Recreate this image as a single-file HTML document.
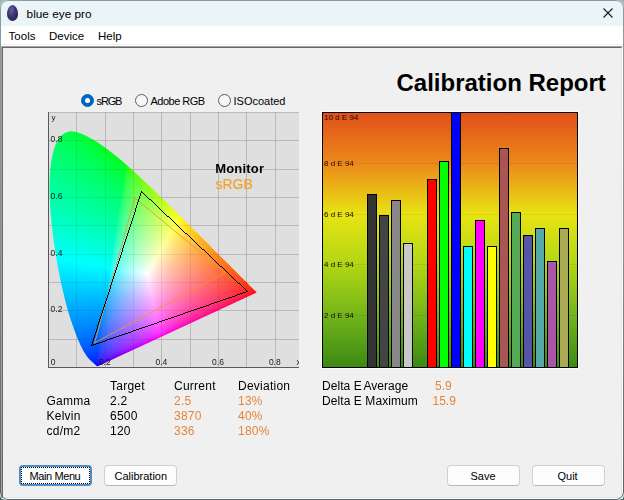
<!DOCTYPE html>
<html><head><meta charset="utf-8">
<style>
html,body{margin:0;padding:0;width:624px;height:500px;overflow:hidden;background:linear-gradient(to bottom,#a0b4b7 0%,#7e9494 60%,#3e5e5a 100%);}
*{box-sizing:border-box;}
.t{position:absolute;white-space:nowrap;font-family:"Liberation Sans",sans-serif;color:#000;line-height:1;}
#win{position:absolute;left:0;top:0;width:624px;height:500px;border-radius:8px 8px 5px 5px;overflow:hidden;background:#f0f0f0;}
#frame{position:absolute;left:0;top:0;width:624px;height:500px;pointer-events:none;}
#title{position:absolute;left:0;top:0;width:624px;height:26px;background:#ebf4f6;}
#menu{position:absolute;left:0;top:26px;width:624px;height:20px;background:#ffffff;}
#client{position:absolute;left:1px;top:46px;width:622px;height:453px;border-top:1px solid #a0a0a0;border-left:1px solid #a0a0a0;border-right:1px solid #ffffff;border-bottom:1px solid #ffffff;}
#client2{position:absolute;left:0;top:0;width:620px;height:451px;border-top:1px solid #696969;border-left:1px solid #696969;border-right:1px solid #e3e3e3;border-bottom:1px solid #e3e3e3;background:#f0f0f0;}
.radio{position:absolute;width:13px;height:13px;border-radius:50%;border:1px solid #5d5d5d;background:#f7f7f7;}
.radio.on{background:#0067c0;border-color:#0067c0;}
.radio.on:after{content:"";position:absolute;left:3px;top:3px;width:5px;height:5px;border-radius:50%;background:#fff;}
.btn{position:absolute;height:21px;border:1px solid #d0d0d0;border-bottom-color:#b8b8b8;border-radius:4px;background:#fdfdfd;}
.or{color:#e8843a;}
.lab{color:#1a1a1a;}
.bl{color:#1e0800;}
.tb{letter-spacing:0.25px;}
</style></head><body>
<div id="win">
<div id="title"></div><div id="menu"></div><div style="position:absolute;left:1px;top:44px;width:622px;height:1px;background:#f0f0f0"></div><div id="client"><div id="client2"></div></div>
<div style="position:absolute;left:7px;top:5.2px;width:11px;height:16px;border-radius:50% 50% 50% 50% / 58% 58% 42% 42%;background:radial-gradient(ellipse at 40% 30%,#6a609c 0%,#3a3274 45%,#1c1838 100%);"></div>
<div class="t" style="left:26.6px;top:8.6px;font-size:11.8px;">blue eye pro</div>
<svg style="position:absolute;left:0;top:0" width="624" height="30"><path d="M603.5 8.5 L612.5 17.5 M612.5 8.5 L603.5 17.5" stroke="#1b1b1b" stroke-width="1.1" fill="none"/></svg>
<div class="t" style="left:8.6px;top:31.0px;font-size:11.5px;">Tools</div>
<div class="t" style="left:49px;top:31.0px;font-size:11.5px;">Device</div>
<div class="t" style="left:98px;top:31.0px;font-size:11.5px;">Help</div>
<div class="t" style="left:396.5px;top:70.5px;font-size:24px;font-weight:bold;">Calibration Report</div>
<div class="radio on" style="left:81px;top:94px;"></div>
<div class="t" style="left:96.6px;top:96px;font-size:11px;letter-spacing:-1.2px;">sRGB</div>
<div class="radio" style="left:135px;top:94px;"></div>
<div class="t" style="left:150.5px;top:96px;font-size:11px;letter-spacing:-0.5px;">Adobe RGB</div>
<div class="radio" style="left:218px;top:94px;"></div>
<div class="t" style="left:233.5px;top:96px;font-size:11px;">ISOcoated</div>
<svg style="position:absolute;left:48px;top:112px" width="251" height="256"><defs><clipPath id="lc"><polygon points="49.8,254.2 49.1,254.2 48.3,253.6 47.1,252.5 44.9,250.6 41.3,247.2 35.7,239.2 26.4,218.0 20.0,198.7 13.4,172.0 7.2,138.7 2.8,103.1 1.6,70.1 4.4,43.1 11.5,25.6 21.5,19.4 32.9,21.5 44.3,27.3 55.1,34.2 65.5,41.9 75.8,50.4 85.9,59.5 106.2,78.7 126.3,98.5 145.7,117.7 163.5,135.4 178.1,150.1 189.1,161.0 196.4,168.3 201.0,172.9 204.2,176.0 206.2,178.0 208.6,180.4"/></clipPath><filter id="bf" x="-5%" y="-5%" width="110%" height="110%"><feGaussianBlur stdDeviation="2.5"/></filter></defs><rect width="251" height="256" fill="#dfdfdf"/><g clip-path="url(#lc)"><g filter="url(#bf)"><rect x="0" y="10" width="5" height="5" fill="#00ff51"/><rect x="5" y="10" width="5" height="5" fill="#00ff4b"/><rect x="10" y="10" width="5" height="5" fill="#00ff45"/><rect x="15" y="10" width="5" height="5" fill="#00ff3e"/><rect x="20" y="10" width="5" height="5" fill="#00ff36"/><rect x="25" y="10" width="5" height="5" fill="#00ff2c"/><rect x="30" y="10" width="5" height="5" fill="#00ff1f"/><rect x="35" y="10" width="5" height="5" fill="#00ff00"/><rect x="40" y="10" width="5" height="5" fill="#00ff00"/><rect x="45" y="10" width="5" height="5" fill="#00ff00"/><rect x="50" y="10" width="5" height="5" fill="#00ff00"/><rect x="55" y="10" width="5" height="5" fill="#00ff00"/><rect x="60" y="10" width="5" height="5" fill="#00ff00"/><rect x="65" y="10" width="5" height="5" fill="#00ff00"/><rect x="70" y="10" width="5" height="5" fill="#00ff00"/><rect x="75" y="10" width="5" height="5" fill="#00ff00"/><rect x="80" y="10" width="5" height="5" fill="#00ff00"/><rect x="85" y="10" width="5" height="5" fill="#2aff00"/><rect x="90" y="10" width="5" height="5" fill="#42ff00"/><rect x="95" y="10" width="5" height="5" fill="#54ff00"/><rect x="100" y="10" width="5" height="5" fill="#63ff00"/><rect x="105" y="10" width="5" height="5" fill="#70ff00"/><rect x="110" y="10" width="5" height="5" fill="#7cff00"/><rect x="115" y="10" width="5" height="5" fill="#88ff00"/><rect x="120" y="10" width="5" height="5" fill="#92ff00"/><rect x="125" y="10" width="5" height="5" fill="#9cff00"/><rect x="130" y="10" width="5" height="5" fill="#a6ff00"/><rect x="135" y="10" width="5" height="5" fill="#afff00"/><rect x="140" y="10" width="5" height="5" fill="#b8ff00"/><rect x="145" y="10" width="5" height="5" fill="#c1ff00"/><rect x="150" y="10" width="5" height="5" fill="#caff00"/><rect x="155" y="10" width="5" height="5" fill="#d2ff00"/><rect x="160" y="10" width="5" height="5" fill="#dbff00"/><rect x="165" y="10" width="5" height="5" fill="#e3ff00"/><rect x="170" y="10" width="5" height="5" fill="#ebff00"/><rect x="175" y="10" width="5" height="5" fill="#f3ff00"/><rect x="180" y="10" width="5" height="5" fill="#fbff00"/><rect x="185" y="10" width="5" height="5" fill="#fffb00"/><rect x="190" y="10" width="5" height="5" fill="#fff400"/><rect x="195" y="10" width="5" height="5" fill="#ffed00"/><rect x="200" y="10" width="5" height="5" fill="#ffe600"/><rect x="205" y="10" width="5" height="5" fill="#ffe000"/><rect x="210" y="10" width="5" height="5" fill="#ffda00"/><rect x="0" y="15" width="5" height="5" fill="#00ff57"/><rect x="5" y="15" width="5" height="5" fill="#00ff52"/><rect x="10" y="15" width="5" height="5" fill="#00ff4c"/><rect x="15" y="15" width="5" height="5" fill="#00ff46"/><rect x="20" y="15" width="5" height="5" fill="#00ff3f"/><rect x="25" y="15" width="5" height="5" fill="#00ff37"/><rect x="30" y="15" width="5" height="5" fill="#00ff2d"/><rect x="35" y="15" width="5" height="5" fill="#00ff20"/><rect x="40" y="15" width="5" height="5" fill="#00ff00"/><rect x="45" y="15" width="5" height="5" fill="#00ff00"/><rect x="50" y="15" width="5" height="5" fill="#00ff00"/><rect x="55" y="15" width="5" height="5" fill="#00ff00"/><rect x="60" y="15" width="5" height="5" fill="#00ff00"/><rect x="65" y="15" width="5" height="5" fill="#00ff00"/><rect x="70" y="15" width="5" height="5" fill="#00ff00"/><rect x="75" y="15" width="5" height="5" fill="#00ff00"/><rect x="80" y="15" width="5" height="5" fill="#00ff00"/><rect x="85" y="15" width="5" height="5" fill="#2fff00"/><rect x="90" y="15" width="5" height="5" fill="#46ff00"/><rect x="95" y="15" width="5" height="5" fill="#57ff00"/><rect x="100" y="15" width="5" height="5" fill="#66ff00"/><rect x="105" y="15" width="5" height="5" fill="#73ff00"/><rect x="110" y="15" width="5" height="5" fill="#7fff00"/><rect x="115" y="15" width="5" height="5" fill="#8bff00"/><rect x="120" y="15" width="5" height="5" fill="#95ff00"/><rect x="125" y="15" width="5" height="5" fill="#a0ff00"/><rect x="130" y="15" width="5" height="5" fill="#a9ff00"/><rect x="135" y="15" width="5" height="5" fill="#b3ff00"/><rect x="140" y="15" width="5" height="5" fill="#bcff00"/><rect x="145" y="15" width="5" height="5" fill="#c5ff00"/><rect x="150" y="15" width="5" height="5" fill="#ceff00"/><rect x="155" y="15" width="5" height="5" fill="#d6ff00"/><rect x="160" y="15" width="5" height="5" fill="#dfff00"/><rect x="165" y="15" width="5" height="5" fill="#e7ff00"/><rect x="170" y="15" width="5" height="5" fill="#efff00"/><rect x="175" y="15" width="5" height="5" fill="#f8ff00"/><rect x="180" y="15" width="5" height="5" fill="#fffe00"/><rect x="185" y="15" width="5" height="5" fill="#fff700"/><rect x="190" y="15" width="5" height="5" fill="#ffef00"/><rect x="195" y="15" width="5" height="5" fill="#ffe800"/><rect x="200" y="15" width="5" height="5" fill="#ffe200"/><rect x="205" y="15" width="5" height="5" fill="#ffdc00"/><rect x="210" y="15" width="5" height="5" fill="#ffd600"/><rect x="0" y="20" width="5" height="5" fill="#00ff5d"/><rect x="5" y="20" width="5" height="5" fill="#00ff59"/><rect x="10" y="20" width="5" height="5" fill="#00ff53"/><rect x="15" y="20" width="5" height="5" fill="#00ff4d"/><rect x="20" y="20" width="5" height="5" fill="#00ff47"/><rect x="25" y="20" width="5" height="5" fill="#00ff40"/><rect x="30" y="20" width="5" height="5" fill="#00ff38"/><rect x="35" y="20" width="5" height="5" fill="#00ff2e"/><rect x="40" y="20" width="5" height="5" fill="#00ff20"/><rect x="45" y="20" width="5" height="5" fill="#00ff03"/><rect x="50" y="20" width="5" height="5" fill="#00ff00"/><rect x="55" y="20" width="5" height="5" fill="#00ff00"/><rect x="60" y="20" width="5" height="5" fill="#00ff00"/><rect x="65" y="20" width="5" height="5" fill="#00ff00"/><rect x="70" y="20" width="5" height="5" fill="#00ff00"/><rect x="75" y="20" width="5" height="5" fill="#00ff00"/><rect x="80" y="20" width="5" height="5" fill="#00ff00"/><rect x="85" y="20" width="5" height="5" fill="#33ff00"/><rect x="90" y="20" width="5" height="5" fill="#49ff00"/><rect x="95" y="20" width="5" height="5" fill="#5bff00"/><rect x="100" y="20" width="5" height="5" fill="#69ff00"/><rect x="105" y="20" width="5" height="5" fill="#77ff00"/><rect x="110" y="20" width="5" height="5" fill="#83ff00"/><rect x="115" y="20" width="5" height="5" fill="#8eff00"/><rect x="120" y="20" width="5" height="5" fill="#99ff00"/><rect x="125" y="20" width="5" height="5" fill="#a3ff00"/><rect x="130" y="20" width="5" height="5" fill="#adff00"/><rect x="135" y="20" width="5" height="5" fill="#b6ff00"/><rect x="140" y="20" width="5" height="5" fill="#c0ff00"/><rect x="145" y="20" width="5" height="5" fill="#c9ff00"/><rect x="150" y="20" width="5" height="5" fill="#d2ff00"/><rect x="155" y="20" width="5" height="5" fill="#daff00"/><rect x="160" y="20" width="5" height="5" fill="#e3ff00"/><rect x="165" y="20" width="5" height="5" fill="#ebff00"/><rect x="170" y="20" width="5" height="5" fill="#f4ff00"/><rect x="175" y="20" width="5" height="5" fill="#fcff00"/><rect x="180" y="20" width="5" height="5" fill="#fffa00"/><rect x="185" y="20" width="5" height="5" fill="#fff200"/><rect x="190" y="20" width="5" height="5" fill="#ffeb00"/><rect x="195" y="20" width="5" height="5" fill="#ffe400"/><rect x="200" y="20" width="5" height="5" fill="#ffde00"/><rect x="205" y="20" width="5" height="5" fill="#ffd800"/><rect x="210" y="20" width="5" height="5" fill="#ffd200"/><rect x="0" y="25" width="5" height="5" fill="#00ff64"/><rect x="5" y="25" width="5" height="5" fill="#00ff5f"/><rect x="10" y="25" width="5" height="5" fill="#00ff5a"/><rect x="15" y="25" width="5" height="5" fill="#00ff55"/><rect x="20" y="25" width="5" height="5" fill="#00ff4f"/><rect x="25" y="25" width="5" height="5" fill="#00ff48"/><rect x="30" y="25" width="5" height="5" fill="#00ff41"/><rect x="35" y="25" width="5" height="5" fill="#00ff39"/><rect x="40" y="25" width="5" height="5" fill="#00ff2f"/><rect x="45" y="25" width="5" height="5" fill="#00ff21"/><rect x="50" y="25" width="5" height="5" fill="#00ff06"/><rect x="55" y="25" width="5" height="5" fill="#00ff00"/><rect x="60" y="25" width="5" height="5" fill="#00ff00"/><rect x="65" y="25" width="5" height="5" fill="#00ff00"/><rect x="70" y="25" width="5" height="5" fill="#00ff00"/><rect x="75" y="25" width="5" height="5" fill="#00ff00"/><rect x="80" y="25" width="5" height="5" fill="#12ff00"/><rect x="85" y="25" width="5" height="5" fill="#38ff00"/><rect x="90" y="25" width="5" height="5" fill="#4dff00"/><rect x="95" y="25" width="5" height="5" fill="#5eff00"/><rect x="100" y="25" width="5" height="5" fill="#6dff00"/><rect x="105" y="25" width="5" height="5" fill="#7aff00"/><rect x="110" y="25" width="5" height="5" fill="#86ff00"/><rect x="115" y="25" width="5" height="5" fill="#91ff00"/><rect x="120" y="25" width="5" height="5" fill="#9cff00"/><rect x="125" y="25" width="5" height="5" fill="#a7ff00"/><rect x="130" y="25" width="5" height="5" fill="#b0ff00"/><rect x="135" y="25" width="5" height="5" fill="#baff00"/><rect x="140" y="25" width="5" height="5" fill="#c3ff00"/><rect x="145" y="25" width="5" height="5" fill="#cdff00"/><rect x="150" y="25" width="5" height="5" fill="#d6ff00"/><rect x="155" y="25" width="5" height="5" fill="#dfff00"/><rect x="160" y="25" width="5" height="5" fill="#e7ff00"/><rect x="165" y="25" width="5" height="5" fill="#f0ff00"/><rect x="170" y="25" width="5" height="5" fill="#f8ff00"/><rect x="175" y="25" width="5" height="5" fill="#fffd00"/><rect x="180" y="25" width="5" height="5" fill="#fff500"/><rect x="185" y="25" width="5" height="5" fill="#ffee00"/><rect x="190" y="25" width="5" height="5" fill="#ffe700"/><rect x="195" y="25" width="5" height="5" fill="#ffe000"/><rect x="200" y="25" width="5" height="5" fill="#ffda00"/><rect x="205" y="25" width="5" height="5" fill="#ffd400"/><rect x="210" y="25" width="5" height="5" fill="#ffce00"/><rect x="0" y="30" width="5" height="5" fill="#00ff6a"/><rect x="5" y="30" width="5" height="5" fill="#00ff65"/><rect x="10" y="30" width="5" height="5" fill="#00ff61"/><rect x="15" y="30" width="5" height="5" fill="#00ff5b"/><rect x="20" y="30" width="5" height="5" fill="#00ff56"/><rect x="25" y="30" width="5" height="5" fill="#00ff50"/><rect x="30" y="30" width="5" height="5" fill="#00ff4a"/><rect x="35" y="30" width="5" height="5" fill="#00ff42"/><rect x="40" y="30" width="5" height="5" fill="#00ff3a"/><rect x="45" y="30" width="5" height="5" fill="#00ff30"/><rect x="50" y="30" width="5" height="5" fill="#00ff22"/><rect x="55" y="30" width="5" height="5" fill="#00ff08"/><rect x="60" y="30" width="5" height="5" fill="#00ff00"/><rect x="65" y="30" width="5" height="5" fill="#00ff00"/><rect x="70" y="30" width="5" height="5" fill="#00ff00"/><rect x="75" y="30" width="5" height="5" fill="#00ff00"/><rect x="80" y="30" width="5" height="5" fill="#1cff00"/><rect x="85" y="30" width="5" height="5" fill="#3cff00"/><rect x="90" y="30" width="5" height="5" fill="#51ff00"/><rect x="95" y="30" width="5" height="5" fill="#62ff00"/><rect x="100" y="30" width="5" height="5" fill="#70ff00"/><rect x="105" y="30" width="5" height="5" fill="#7dff00"/><rect x="110" y="30" width="5" height="5" fill="#89ff00"/><rect x="115" y="30" width="5" height="5" fill="#95ff00"/><rect x="120" y="30" width="5" height="5" fill="#a0ff00"/><rect x="125" y="30" width="5" height="5" fill="#aaff00"/><rect x="130" y="30" width="5" height="5" fill="#b4ff00"/><rect x="135" y="30" width="5" height="5" fill="#beff00"/><rect x="140" y="30" width="5" height="5" fill="#c7ff00"/><rect x="145" y="30" width="5" height="5" fill="#d1ff00"/><rect x="150" y="30" width="5" height="5" fill="#daff00"/><rect x="155" y="30" width="5" height="5" fill="#e3ff00"/><rect x="160" y="30" width="5" height="5" fill="#ecff00"/><rect x="165" y="30" width="5" height="5" fill="#f4ff00"/><rect x="170" y="30" width="5" height="5" fill="#fdff00"/><rect x="175" y="30" width="5" height="5" fill="#fff800"/><rect x="180" y="30" width="5" height="5" fill="#fff000"/><rect x="185" y="30" width="5" height="5" fill="#ffe900"/><rect x="190" y="30" width="5" height="5" fill="#ffe200"/><rect x="195" y="30" width="5" height="5" fill="#ffdc00"/><rect x="200" y="30" width="5" height="5" fill="#ffd500"/><rect x="205" y="30" width="5" height="5" fill="#ffd000"/><rect x="210" y="30" width="5" height="5" fill="#ffca00"/><rect x="0" y="35" width="5" height="5" fill="#00ff70"/><rect x="5" y="35" width="5" height="5" fill="#00ff6b"/><rect x="10" y="35" width="5" height="5" fill="#00ff67"/><rect x="15" y="35" width="5" height="5" fill="#00ff62"/><rect x="20" y="35" width="5" height="5" fill="#00ff5d"/><rect x="25" y="35" width="5" height="5" fill="#00ff58"/><rect x="30" y="35" width="5" height="5" fill="#00ff51"/><rect x="35" y="35" width="5" height="5" fill="#00ff4b"/><rect x="40" y="35" width="5" height="5" fill="#00ff43"/><rect x="45" y="35" width="5" height="5" fill="#00ff3b"/><rect x="50" y="35" width="5" height="5" fill="#00ff31"/><rect x="55" y="35" width="5" height="5" fill="#00ff23"/><rect x="60" y="35" width="5" height="5" fill="#00ff09"/><rect x="65" y="35" width="5" height="5" fill="#00ff00"/><rect x="70" y="35" width="5" height="5" fill="#00ff00"/><rect x="75" y="35" width="5" height="5" fill="#00ff00"/><rect x="80" y="35" width="5" height="5" fill="#23ff00"/><rect x="85" y="35" width="5" height="5" fill="#40ff00"/><rect x="90" y="35" width="5" height="5" fill="#55ff00"/><rect x="95" y="35" width="5" height="5" fill="#65ff00"/><rect x="100" y="35" width="5" height="5" fill="#74ff00"/><rect x="105" y="35" width="5" height="5" fill="#81ff00"/><rect x="110" y="35" width="5" height="5" fill="#8dff00"/><rect x="115" y="35" width="5" height="5" fill="#98ff00"/><rect x="120" y="35" width="5" height="5" fill="#a3ff00"/><rect x="125" y="35" width="5" height="5" fill="#aeff00"/><rect x="130" y="35" width="5" height="5" fill="#b8ff00"/><rect x="135" y="35" width="5" height="5" fill="#c2ff00"/><rect x="140" y="35" width="5" height="5" fill="#ccff00"/><rect x="145" y="35" width="5" height="5" fill="#d5ff00"/><rect x="150" y="35" width="5" height="5" fill="#deff00"/><rect x="155" y="35" width="5" height="5" fill="#e7ff00"/><rect x="160" y="35" width="5" height="5" fill="#f0ff00"/><rect x="165" y="35" width="5" height="5" fill="#f9ff00"/><rect x="170" y="35" width="5" height="5" fill="#fffc00"/><rect x="175" y="35" width="5" height="5" fill="#fff400"/><rect x="180" y="35" width="5" height="5" fill="#ffec00"/><rect x="185" y="35" width="5" height="5" fill="#ffe500"/><rect x="190" y="35" width="5" height="5" fill="#ffde00"/><rect x="195" y="35" width="5" height="5" fill="#ffd700"/><rect x="200" y="35" width="5" height="5" fill="#ffd100"/><rect x="205" y="35" width="5" height="5" fill="#ffcc00"/><rect x="210" y="35" width="5" height="5" fill="#ffc600"/><rect x="0" y="40" width="5" height="5" fill="#00ff75"/><rect x="5" y="40" width="5" height="5" fill="#00ff71"/><rect x="10" y="40" width="5" height="5" fill="#00ff6d"/><rect x="15" y="40" width="5" height="5" fill="#00ff69"/><rect x="20" y="40" width="5" height="5" fill="#00ff64"/><rect x="25" y="40" width="5" height="5" fill="#00ff5f"/><rect x="30" y="40" width="5" height="5" fill="#00ff59"/><rect x="35" y="40" width="5" height="5" fill="#00ff53"/><rect x="40" y="40" width="5" height="5" fill="#00ff4c"/><rect x="45" y="40" width="5" height="5" fill="#00ff45"/><rect x="50" y="40" width="5" height="5" fill="#00ff3c"/><rect x="55" y="40" width="5" height="5" fill="#00ff32"/><rect x="60" y="40" width="5" height="5" fill="#00ff24"/><rect x="65" y="40" width="5" height="5" fill="#00ff0a"/><rect x="70" y="40" width="5" height="5" fill="#00ff00"/><rect x="75" y="40" width="5" height="5" fill="#00ff00"/><rect x="80" y="40" width="5" height="5" fill="#29ff00"/><rect x="85" y="40" width="5" height="5" fill="#45ff00"/><rect x="90" y="40" width="5" height="5" fill="#58ff00"/><rect x="95" y="40" width="5" height="5" fill="#69ff00"/><rect x="100" y="40" width="5" height="5" fill="#77ff00"/><rect x="105" y="40" width="5" height="5" fill="#84ff00"/><rect x="110" y="40" width="5" height="5" fill="#91ff00"/><rect x="115" y="40" width="5" height="5" fill="#9cff00"/><rect x="120" y="40" width="5" height="5" fill="#a7ff00"/><rect x="125" y="40" width="5" height="5" fill="#b2ff00"/><rect x="130" y="40" width="5" height="5" fill="#bcff00"/><rect x="135" y="40" width="5" height="5" fill="#c6ff00"/><rect x="140" y="40" width="5" height="5" fill="#d0ff00"/><rect x="145" y="40" width="5" height="5" fill="#d9ff00"/><rect x="150" y="40" width="5" height="5" fill="#e3ff00"/><rect x="155" y="40" width="5" height="5" fill="#ecff00"/><rect x="160" y="40" width="5" height="5" fill="#f5ff00"/><rect x="165" y="40" width="5" height="5" fill="#feff00"/><rect x="170" y="40" width="5" height="5" fill="#fff700"/><rect x="175" y="40" width="5" height="5" fill="#ffef00"/><rect x="180" y="40" width="5" height="5" fill="#ffe700"/><rect x="185" y="40" width="5" height="5" fill="#ffe000"/><rect x="190" y="40" width="5" height="5" fill="#ffd900"/><rect x="195" y="40" width="5" height="5" fill="#ffd300"/><rect x="200" y="40" width="5" height="5" fill="#ffcd00"/><rect x="205" y="40" width="5" height="5" fill="#ffc700"/><rect x="210" y="40" width="5" height="5" fill="#ffc200"/><rect x="0" y="45" width="5" height="5" fill="#00ff7b"/><rect x="5" y="45" width="5" height="5" fill="#00ff77"/><rect x="10" y="45" width="5" height="5" fill="#00ff73"/><rect x="15" y="45" width="5" height="5" fill="#00ff6f"/><rect x="20" y="45" width="5" height="5" fill="#00ff6a"/><rect x="25" y="45" width="5" height="5" fill="#00ff66"/><rect x="30" y="45" width="5" height="5" fill="#00ff60"/><rect x="35" y="45" width="5" height="5" fill="#00ff5b"/><rect x="40" y="45" width="5" height="5" fill="#00ff55"/><rect x="45" y="45" width="5" height="5" fill="#00ff4e"/><rect x="50" y="45" width="5" height="5" fill="#00ff46"/><rect x="55" y="45" width="5" height="5" fill="#00ff3d"/><rect x="60" y="45" width="5" height="5" fill="#00ff33"/><rect x="65" y="45" width="5" height="5" fill="#00ff25"/><rect x="70" y="45" width="5" height="5" fill="#00ff0c"/><rect x="75" y="45" width="5" height="5" fill="#00ff00"/><rect x="80" y="45" width="5" height="5" fill="#2fff00"/><rect x="85" y="45" width="5" height="5" fill="#49ff00"/><rect x="90" y="45" width="5" height="5" fill="#5cff00"/><rect x="95" y="45" width="5" height="5" fill="#6cff00"/><rect x="100" y="45" width="5" height="5" fill="#7bff00"/><rect x="105" y="45" width="5" height="5" fill="#88ff00"/><rect x="110" y="45" width="5" height="5" fill="#94ff00"/><rect x="115" y="45" width="5" height="5" fill="#a0ff00"/><rect x="120" y="45" width="5" height="5" fill="#abff00"/><rect x="125" y="45" width="5" height="5" fill="#b6ff00"/><rect x="130" y="45" width="5" height="5" fill="#c0ff00"/><rect x="135" y="45" width="5" height="5" fill="#caff00"/><rect x="140" y="45" width="5" height="5" fill="#d4ff00"/><rect x="145" y="45" width="5" height="5" fill="#deff00"/><rect x="150" y="45" width="5" height="5" fill="#e8ff00"/><rect x="155" y="45" width="5" height="5" fill="#f1ff00"/><rect x="160" y="45" width="5" height="5" fill="#faff00"/><rect x="165" y="45" width="5" height="5" fill="#fffa00"/><rect x="170" y="45" width="5" height="5" fill="#fff200"/><rect x="175" y="45" width="5" height="5" fill="#ffea00"/><rect x="180" y="45" width="5" height="5" fill="#ffe200"/><rect x="185" y="45" width="5" height="5" fill="#ffdb00"/><rect x="190" y="45" width="5" height="5" fill="#ffd500"/><rect x="195" y="45" width="5" height="5" fill="#ffcf00"/><rect x="200" y="45" width="5" height="5" fill="#ffc900"/><rect x="205" y="45" width="5" height="5" fill="#ffc300"/><rect x="210" y="45" width="5" height="5" fill="#ffbe00"/><rect x="0" y="50" width="5" height="5" fill="#00ff81"/><rect x="5" y="50" width="5" height="5" fill="#00ff7d"/><rect x="10" y="50" width="5" height="5" fill="#00ff79"/><rect x="15" y="50" width="5" height="5" fill="#00ff75"/><rect x="20" y="50" width="5" height="5" fill="#00ff71"/><rect x="25" y="50" width="5" height="5" fill="#00ff6c"/><rect x="30" y="50" width="5" height="5" fill="#00ff67"/><rect x="35" y="50" width="5" height="5" fill="#00ff62"/><rect x="40" y="50" width="5" height="5" fill="#00ff5c"/><rect x="45" y="50" width="5" height="5" fill="#00ff56"/><rect x="50" y="50" width="5" height="5" fill="#00ff4f"/><rect x="55" y="50" width="5" height="5" fill="#00ff48"/><rect x="60" y="50" width="5" height="5" fill="#00ff3f"/><rect x="65" y="50" width="5" height="5" fill="#00ff34"/><rect x="70" y="50" width="5" height="5" fill="#00ff26"/><rect x="75" y="50" width="5" height="5" fill="#00ff0d"/><rect x="80" y="50" width="5" height="5" fill="#34ff00"/><rect x="85" y="50" width="5" height="5" fill="#4dff00"/><rect x="90" y="50" width="5" height="5" fill="#60ff00"/><rect x="95" y="50" width="5" height="5" fill="#70ff00"/><rect x="100" y="50" width="5" height="5" fill="#7eff00"/><rect x="105" y="50" width="5" height="5" fill="#8cff00"/><rect x="110" y="50" width="5" height="5" fill="#98ff00"/><rect x="115" y="50" width="5" height="5" fill="#a4ff00"/><rect x="120" y="50" width="5" height="5" fill="#afff00"/><rect x="125" y="50" width="5" height="5" fill="#baff00"/><rect x="130" y="50" width="5" height="5" fill="#c5ff00"/><rect x="135" y="50" width="5" height="5" fill="#cfff00"/><rect x="140" y="50" width="5" height="5" fill="#d9ff00"/><rect x="145" y="50" width="5" height="5" fill="#e3ff00"/><rect x="150" y="50" width="5" height="5" fill="#ecff00"/><rect x="155" y="50" width="5" height="5" fill="#f6ff00"/><rect x="160" y="50" width="5" height="5" fill="#fffe00"/><rect x="165" y="50" width="5" height="5" fill="#fff500"/><rect x="170" y="50" width="5" height="5" fill="#ffed00"/><rect x="175" y="50" width="5" height="5" fill="#ffe500"/><rect x="180" y="50" width="5" height="5" fill="#ffde00"/><rect x="185" y="50" width="5" height="5" fill="#ffd700"/><rect x="190" y="50" width="5" height="5" fill="#ffd000"/><rect x="195" y="50" width="5" height="5" fill="#ffca00"/><rect x="200" y="50" width="5" height="5" fill="#ffc400"/><rect x="205" y="50" width="5" height="5" fill="#ffbf00"/><rect x="210" y="50" width="5" height="5" fill="#ffba00"/><rect x="0" y="55" width="5" height="5" fill="#00ff87"/><rect x="5" y="55" width="5" height="5" fill="#00ff83"/><rect x="10" y="55" width="5" height="5" fill="#00ff80"/><rect x="15" y="55" width="5" height="5" fill="#00ff7c"/><rect x="20" y="55" width="5" height="5" fill="#00ff78"/><rect x="25" y="55" width="5" height="5" fill="#00ff73"/><rect x="30" y="55" width="5" height="5" fill="#00ff6e"/><rect x="35" y="55" width="5" height="5" fill="#00ff69"/><rect x="40" y="55" width="5" height="5" fill="#00ff64"/><rect x="45" y="55" width="5" height="5" fill="#00ff5e"/><rect x="50" y="55" width="5" height="5" fill="#00ff58"/><rect x="55" y="55" width="5" height="5" fill="#00ff51"/><rect x="60" y="55" width="5" height="5" fill="#00ff49"/><rect x="65" y="55" width="5" height="5" fill="#00ff40"/><rect x="70" y="55" width="5" height="5" fill="#00ff35"/><rect x="75" y="55" width="5" height="5" fill="#09ff27"/><rect x="80" y="55" width="5" height="5" fill="#39ff0e"/><rect x="85" y="55" width="5" height="5" fill="#51ff00"/><rect x="90" y="55" width="5" height="5" fill="#64ff00"/><rect x="95" y="55" width="5" height="5" fill="#74ff00"/><rect x="100" y="55" width="5" height="5" fill="#82ff00"/><rect x="105" y="55" width="5" height="5" fill="#90ff00"/><rect x="110" y="55" width="5" height="5" fill="#9cff00"/><rect x="115" y="55" width="5" height="5" fill="#a8ff00"/><rect x="120" y="55" width="5" height="5" fill="#b3ff00"/><rect x="125" y="55" width="5" height="5" fill="#beff00"/><rect x="130" y="55" width="5" height="5" fill="#c9ff00"/><rect x="135" y="55" width="5" height="5" fill="#d3ff00"/><rect x="140" y="55" width="5" height="5" fill="#deff00"/><rect x="145" y="55" width="5" height="5" fill="#e8ff00"/><rect x="150" y="55" width="5" height="5" fill="#f2ff00"/><rect x="155" y="55" width="5" height="5" fill="#fbff00"/><rect x="160" y="55" width="5" height="5" fill="#fff900"/><rect x="165" y="55" width="5" height="5" fill="#fff000"/><rect x="170" y="55" width="5" height="5" fill="#ffe800"/><rect x="175" y="55" width="5" height="5" fill="#ffe000"/><rect x="180" y="55" width="5" height="5" fill="#ffd900"/><rect x="185" y="55" width="5" height="5" fill="#ffd200"/><rect x="190" y="55" width="5" height="5" fill="#ffcc00"/><rect x="195" y="55" width="5" height="5" fill="#ffc600"/><rect x="200" y="55" width="5" height="5" fill="#ffc000"/><rect x="205" y="55" width="5" height="5" fill="#ffbb00"/><rect x="210" y="55" width="5" height="5" fill="#ffb500"/><rect x="0" y="60" width="5" height="5" fill="#00ff8d"/><rect x="5" y="60" width="5" height="5" fill="#00ff89"/><rect x="10" y="60" width="5" height="5" fill="#00ff86"/><rect x="15" y="60" width="5" height="5" fill="#00ff82"/><rect x="20" y="60" width="5" height="5" fill="#00ff7e"/><rect x="25" y="60" width="5" height="5" fill="#00ff7a"/><rect x="30" y="60" width="5" height="5" fill="#00ff75"/><rect x="35" y="60" width="5" height="5" fill="#00ff71"/><rect x="40" y="60" width="5" height="5" fill="#00ff6c"/><rect x="45" y="60" width="5" height="5" fill="#00ff66"/><rect x="50" y="60" width="5" height="5" fill="#00ff60"/><rect x="55" y="60" width="5" height="5" fill="#00ff5a"/><rect x="60" y="60" width="5" height="5" fill="#00ff53"/><rect x="65" y="60" width="5" height="5" fill="#00ff4b"/><rect x="70" y="60" width="5" height="5" fill="#00ff42"/><rect x="75" y="60" width="5" height="5" fill="#18ff37"/><rect x="80" y="60" width="5" height="5" fill="#3eff28"/><rect x="85" y="60" width="5" height="5" fill="#55ff0f"/><rect x="90" y="60" width="5" height="5" fill="#68ff00"/><rect x="95" y="60" width="5" height="5" fill="#78ff00"/><rect x="100" y="60" width="5" height="5" fill="#86ff00"/><rect x="105" y="60" width="5" height="5" fill="#94ff00"/><rect x="110" y="60" width="5" height="5" fill="#a0ff00"/><rect x="115" y="60" width="5" height="5" fill="#acff00"/><rect x="120" y="60" width="5" height="5" fill="#b8ff00"/><rect x="125" y="60" width="5" height="5" fill="#c3ff00"/><rect x="130" y="60" width="5" height="5" fill="#ceff00"/><rect x="135" y="60" width="5" height="5" fill="#d8ff00"/><rect x="140" y="60" width="5" height="5" fill="#e3ff00"/><rect x="145" y="60" width="5" height="5" fill="#edff00"/><rect x="150" y="60" width="5" height="5" fill="#f7ff00"/><rect x="155" y="60" width="5" height="5" fill="#fffd00"/><rect x="160" y="60" width="5" height="5" fill="#fff300"/><rect x="165" y="60" width="5" height="5" fill="#ffeb00"/><rect x="170" y="60" width="5" height="5" fill="#ffe300"/><rect x="175" y="60" width="5" height="5" fill="#ffdb00"/><rect x="180" y="60" width="5" height="5" fill="#ffd400"/><rect x="185" y="60" width="5" height="5" fill="#ffcd00"/><rect x="190" y="60" width="5" height="5" fill="#ffc700"/><rect x="195" y="60" width="5" height="5" fill="#ffc100"/><rect x="200" y="60" width="5" height="5" fill="#ffbc00"/><rect x="205" y="60" width="5" height="5" fill="#ffb600"/><rect x="210" y="60" width="5" height="5" fill="#ffb100"/><rect x="0" y="65" width="5" height="5" fill="#00ff93"/><rect x="5" y="65" width="5" height="5" fill="#00ff8f"/><rect x="10" y="65" width="5" height="5" fill="#00ff8c"/><rect x="15" y="65" width="5" height="5" fill="#00ff88"/><rect x="20" y="65" width="5" height="5" fill="#00ff84"/><rect x="25" y="65" width="5" height="5" fill="#00ff80"/><rect x="30" y="65" width="5" height="5" fill="#00ff7c"/><rect x="35" y="65" width="5" height="5" fill="#00ff78"/><rect x="40" y="65" width="5" height="5" fill="#00ff73"/><rect x="45" y="65" width="5" height="5" fill="#00ff6e"/><rect x="50" y="65" width="5" height="5" fill="#00ff68"/><rect x="55" y="65" width="5" height="5" fill="#00ff62"/><rect x="60" y="65" width="5" height="5" fill="#00ff5c"/><rect x="65" y="65" width="5" height="5" fill="#00ff55"/><rect x="70" y="65" width="5" height="5" fill="#00ff4c"/><rect x="75" y="65" width="5" height="5" fill="#21ff43"/><rect x="80" y="65" width="5" height="5" fill="#43ff38"/><rect x="85" y="65" width="5" height="5" fill="#5aff2a"/><rect x="90" y="65" width="5" height="5" fill="#6cff11"/><rect x="95" y="65" width="5" height="5" fill="#7cff00"/><rect x="100" y="65" width="5" height="5" fill="#8aff00"/><rect x="105" y="65" width="5" height="5" fill="#98ff00"/><rect x="110" y="65" width="5" height="5" fill="#a4ff00"/><rect x="115" y="65" width="5" height="5" fill="#b1ff00"/><rect x="120" y="65" width="5" height="5" fill="#bcff00"/><rect x="125" y="65" width="5" height="5" fill="#c8ff00"/><rect x="130" y="65" width="5" height="5" fill="#d3ff00"/><rect x="135" y="65" width="5" height="5" fill="#ddff00"/><rect x="140" y="65" width="5" height="5" fill="#e8ff00"/><rect x="145" y="65" width="5" height="5" fill="#f2ff00"/><rect x="150" y="65" width="5" height="5" fill="#fdff00"/><rect x="155" y="65" width="5" height="5" fill="#fff700"/><rect x="160" y="65" width="5" height="5" fill="#ffee00"/><rect x="165" y="65" width="5" height="5" fill="#ffe500"/><rect x="170" y="65" width="5" height="5" fill="#ffde00"/><rect x="175" y="65" width="5" height="5" fill="#ffd600"/><rect x="180" y="65" width="5" height="5" fill="#ffcf00"/><rect x="185" y="65" width="5" height="5" fill="#ffc900"/><rect x="190" y="65" width="5" height="5" fill="#ffc200"/><rect x="195" y="65" width="5" height="5" fill="#ffbd00"/><rect x="200" y="65" width="5" height="5" fill="#ffb700"/><rect x="205" y="65" width="5" height="5" fill="#ffb200"/><rect x="210" y="65" width="5" height="5" fill="#ffad00"/><rect x="0" y="70" width="5" height="5" fill="#00ff99"/><rect x="5" y="70" width="5" height="5" fill="#00ff95"/><rect x="10" y="70" width="5" height="5" fill="#00ff92"/><rect x="15" y="70" width="5" height="5" fill="#00ff8f"/><rect x="20" y="70" width="5" height="5" fill="#00ff8b"/><rect x="25" y="70" width="5" height="5" fill="#00ff87"/><rect x="30" y="70" width="5" height="5" fill="#00ff83"/><rect x="35" y="70" width="5" height="5" fill="#00ff7f"/><rect x="40" y="70" width="5" height="5" fill="#00ff7a"/><rect x="45" y="70" width="5" height="5" fill="#00ff75"/><rect x="50" y="70" width="5" height="5" fill="#00ff70"/><rect x="55" y="70" width="5" height="5" fill="#00ff6a"/><rect x="60" y="70" width="5" height="5" fill="#00ff64"/><rect x="65" y="70" width="5" height="5" fill="#00ff5e"/><rect x="70" y="70" width="5" height="5" fill="#00ff57"/><rect x="75" y="70" width="5" height="5" fill="#29ff4e"/><rect x="80" y="70" width="5" height="5" fill="#48ff45"/><rect x="85" y="70" width="5" height="5" fill="#5eff39"/><rect x="90" y="70" width="5" height="5" fill="#70ff2b"/><rect x="95" y="70" width="5" height="5" fill="#80ff12"/><rect x="100" y="70" width="5" height="5" fill="#8eff00"/><rect x="105" y="70" width="5" height="5" fill="#9cff00"/><rect x="110" y="70" width="5" height="5" fill="#a9ff00"/><rect x="115" y="70" width="5" height="5" fill="#b5ff00"/><rect x="120" y="70" width="5" height="5" fill="#c1ff00"/><rect x="125" y="70" width="5" height="5" fill="#ccff00"/><rect x="130" y="70" width="5" height="5" fill="#d8ff00"/><rect x="135" y="70" width="5" height="5" fill="#e3ff00"/><rect x="140" y="70" width="5" height="5" fill="#edff00"/><rect x="145" y="70" width="5" height="5" fill="#f8ff00"/><rect x="150" y="70" width="5" height="5" fill="#fffb00"/><rect x="155" y="70" width="5" height="5" fill="#fff200"/><rect x="160" y="70" width="5" height="5" fill="#ffe800"/><rect x="165" y="70" width="5" height="5" fill="#ffe000"/><rect x="170" y="70" width="5" height="5" fill="#ffd800"/><rect x="175" y="70" width="5" height="5" fill="#ffd100"/><rect x="180" y="70" width="5" height="5" fill="#ffca00"/><rect x="185" y="70" width="5" height="5" fill="#ffc400"/><rect x="190" y="70" width="5" height="5" fill="#ffbe00"/><rect x="195" y="70" width="5" height="5" fill="#ffb800"/><rect x="200" y="70" width="5" height="5" fill="#ffb300"/><rect x="205" y="70" width="5" height="5" fill="#ffad00"/><rect x="210" y="70" width="5" height="5" fill="#ffa800"/><rect x="0" y="75" width="5" height="5" fill="#00ff9e"/><rect x="5" y="75" width="5" height="5" fill="#00ff9b"/><rect x="10" y="75" width="5" height="5" fill="#00ff98"/><rect x="15" y="75" width="5" height="5" fill="#00ff95"/><rect x="20" y="75" width="5" height="5" fill="#00ff91"/><rect x="25" y="75" width="5" height="5" fill="#00ff8e"/><rect x="30" y="75" width="5" height="5" fill="#00ff8a"/><rect x="35" y="75" width="5" height="5" fill="#00ff86"/><rect x="40" y="75" width="5" height="5" fill="#00ff81"/><rect x="45" y="75" width="5" height="5" fill="#00ff7d"/><rect x="50" y="75" width="5" height="5" fill="#00ff78"/><rect x="55" y="75" width="5" height="5" fill="#00ff73"/><rect x="60" y="75" width="5" height="5" fill="#00ff6d"/><rect x="65" y="75" width="5" height="5" fill="#00ff67"/><rect x="70" y="75" width="5" height="5" fill="#00ff60"/><rect x="75" y="75" width="5" height="5" fill="#2fff59"/><rect x="80" y="75" width="5" height="5" fill="#4dff50"/><rect x="85" y="75" width="5" height="5" fill="#62ff47"/><rect x="90" y="75" width="5" height="5" fill="#74ff3b"/><rect x="95" y="75" width="5" height="5" fill="#84ff2c"/><rect x="100" y="75" width="5" height="5" fill="#93ff13"/><rect x="105" y="75" width="5" height="5" fill="#a0ff00"/><rect x="110" y="75" width="5" height="5" fill="#adff00"/><rect x="115" y="75" width="5" height="5" fill="#baff00"/><rect x="120" y="75" width="5" height="5" fill="#c6ff00"/><rect x="125" y="75" width="5" height="5" fill="#d2ff00"/><rect x="130" y="75" width="5" height="5" fill="#ddff00"/><rect x="135" y="75" width="5" height="5" fill="#e8ff00"/><rect x="140" y="75" width="5" height="5" fill="#f3ff00"/><rect x="145" y="75" width="5" height="5" fill="#feff00"/><rect x="150" y="75" width="5" height="5" fill="#fff500"/><rect x="155" y="75" width="5" height="5" fill="#ffec00"/><rect x="160" y="75" width="5" height="5" fill="#ffe300"/><rect x="165" y="75" width="5" height="5" fill="#ffdb00"/><rect x="170" y="75" width="5" height="5" fill="#ffd300"/><rect x="175" y="75" width="5" height="5" fill="#ffcc00"/><rect x="180" y="75" width="5" height="5" fill="#ffc500"/><rect x="185" y="75" width="5" height="5" fill="#ffbf00"/><rect x="190" y="75" width="5" height="5" fill="#ffb900"/><rect x="195" y="75" width="5" height="5" fill="#ffb300"/><rect x="200" y="75" width="5" height="5" fill="#ffae00"/><rect x="205" y="75" width="5" height="5" fill="#ffa900"/><rect x="210" y="75" width="5" height="5" fill="#ffa400"/><rect x="0" y="80" width="5" height="5" fill="#00ffa5"/><rect x="5" y="80" width="5" height="5" fill="#00ffa2"/><rect x="10" y="80" width="5" height="5" fill="#00ff9e"/><rect x="15" y="80" width="5" height="5" fill="#00ff9b"/><rect x="20" y="80" width="5" height="5" fill="#00ff98"/><rect x="25" y="80" width="5" height="5" fill="#00ff94"/><rect x="30" y="80" width="5" height="5" fill="#00ff91"/><rect x="35" y="80" width="5" height="5" fill="#00ff8d"/><rect x="40" y="80" width="5" height="5" fill="#00ff89"/><rect x="45" y="80" width="5" height="5" fill="#00ff84"/><rect x="50" y="80" width="5" height="5" fill="#00ff7f"/><rect x="55" y="80" width="5" height="5" fill="#00ff7b"/><rect x="60" y="80" width="5" height="5" fill="#00ff75"/><rect x="65" y="80" width="5" height="5" fill="#00ff6f"/><rect x="70" y="80" width="5" height="5" fill="#00ff69"/><rect x="75" y="80" width="5" height="5" fill="#36ff62"/><rect x="80" y="80" width="5" height="5" fill="#51ff5b"/><rect x="85" y="80" width="5" height="5" fill="#67ff52"/><rect x="90" y="80" width="5" height="5" fill="#78ff49"/><rect x="95" y="80" width="5" height="5" fill="#88ff3d"/><rect x="100" y="80" width="5" height="5" fill="#97ff2e"/><rect x="105" y="80" width="5" height="5" fill="#a5ff15"/><rect x="110" y="80" width="5" height="5" fill="#b2ff00"/><rect x="115" y="80" width="5" height="5" fill="#bfff00"/><rect x="120" y="80" width="5" height="5" fill="#cbff00"/><rect x="125" y="80" width="5" height="5" fill="#d7ff00"/><rect x="130" y="80" width="5" height="5" fill="#e3ff00"/><rect x="135" y="80" width="5" height="5" fill="#eeff00"/><rect x="140" y="80" width="5" height="5" fill="#f9ff00"/><rect x="145" y="80" width="5" height="5" fill="#fffa00"/><rect x="150" y="80" width="5" height="5" fill="#ffef00"/><rect x="155" y="80" width="5" height="5" fill="#ffe600"/><rect x="160" y="80" width="5" height="5" fill="#ffdd00"/><rect x="165" y="80" width="5" height="5" fill="#ffd500"/><rect x="170" y="80" width="5" height="5" fill="#ffce00"/><rect x="175" y="80" width="5" height="5" fill="#ffc700"/><rect x="180" y="80" width="5" height="5" fill="#ffc000"/><rect x="185" y="80" width="5" height="5" fill="#ffba00"/><rect x="190" y="80" width="5" height="5" fill="#ffb400"/><rect x="195" y="80" width="5" height="5" fill="#ffaf00"/><rect x="200" y="80" width="5" height="5" fill="#ffa900"/><rect x="205" y="80" width="5" height="5" fill="#ffa400"/><rect x="210" y="80" width="5" height="5" fill="#ff9f00"/><rect x="0" y="85" width="5" height="5" fill="#00ffab"/><rect x="5" y="85" width="5" height="5" fill="#00ffa8"/><rect x="10" y="85" width="5" height="5" fill="#00ffa5"/><rect x="15" y="85" width="5" height="5" fill="#00ffa2"/><rect x="20" y="85" width="5" height="5" fill="#00ff9e"/><rect x="25" y="85" width="5" height="5" fill="#00ff9b"/><rect x="30" y="85" width="5" height="5" fill="#00ff98"/><rect x="35" y="85" width="5" height="5" fill="#00ff94"/><rect x="40" y="85" width="5" height="5" fill="#00ff90"/><rect x="45" y="85" width="5" height="5" fill="#00ff8c"/><rect x="50" y="85" width="5" height="5" fill="#00ff87"/><rect x="55" y="85" width="5" height="5" fill="#00ff82"/><rect x="60" y="85" width="5" height="5" fill="#00ff7d"/><rect x="65" y="85" width="5" height="5" fill="#00ff78"/><rect x="70" y="85" width="5" height="5" fill="#00ff72"/><rect x="75" y="85" width="5" height="5" fill="#3bff6c"/><rect x="80" y="85" width="5" height="5" fill="#56ff65"/><rect x="85" y="85" width="5" height="5" fill="#6bff5d"/><rect x="90" y="85" width="5" height="5" fill="#7dff55"/><rect x="95" y="85" width="5" height="5" fill="#8dff4b"/><rect x="100" y="85" width="5" height="5" fill="#9cff3f"/><rect x="105" y="85" width="5" height="5" fill="#aaff2f"/><rect x="110" y="85" width="5" height="5" fill="#b7ff16"/><rect x="115" y="85" width="5" height="5" fill="#c4ff00"/><rect x="120" y="85" width="5" height="5" fill="#d0ff00"/><rect x="125" y="85" width="5" height="5" fill="#ddff00"/><rect x="130" y="85" width="5" height="5" fill="#e8ff00"/><rect x="135" y="85" width="5" height="5" fill="#f4ff00"/><rect x="140" y="85" width="5" height="5" fill="#fffe00"/><rect x="145" y="85" width="5" height="5" fill="#fff300"/><rect x="150" y="85" width="5" height="5" fill="#ffe900"/><rect x="155" y="85" width="5" height="5" fill="#ffe000"/><rect x="160" y="85" width="5" height="5" fill="#ffd800"/><rect x="165" y="85" width="5" height="5" fill="#ffd000"/><rect x="170" y="85" width="5" height="5" fill="#ffc900"/><rect x="175" y="85" width="5" height="5" fill="#ffc200"/><rect x="180" y="85" width="5" height="5" fill="#ffbb00"/><rect x="185" y="85" width="5" height="5" fill="#ffb500"/><rect x="190" y="85" width="5" height="5" fill="#ffaf00"/><rect x="195" y="85" width="5" height="5" fill="#ffaa00"/><rect x="200" y="85" width="5" height="5" fill="#ffa500"/><rect x="205" y="85" width="5" height="5" fill="#ffa000"/><rect x="210" y="85" width="5" height="5" fill="#ff9b00"/><rect x="0" y="90" width="5" height="5" fill="#00ffb1"/><rect x="5" y="90" width="5" height="5" fill="#00ffae"/><rect x="10" y="90" width="5" height="5" fill="#00ffab"/><rect x="15" y="90" width="5" height="5" fill="#00ffa8"/><rect x="20" y="90" width="5" height="5" fill="#00ffa5"/><rect x="25" y="90" width="5" height="5" fill="#00ffa2"/><rect x="30" y="90" width="5" height="5" fill="#00ff9f"/><rect x="35" y="90" width="5" height="5" fill="#00ff9b"/><rect x="40" y="90" width="5" height="5" fill="#00ff97"/><rect x="45" y="90" width="5" height="5" fill="#00ff93"/><rect x="50" y="90" width="5" height="5" fill="#00ff8f"/><rect x="55" y="90" width="5" height="5" fill="#00ff8a"/><rect x="60" y="90" width="5" height="5" fill="#00ff86"/><rect x="65" y="90" width="5" height="5" fill="#00ff80"/><rect x="70" y="90" width="5" height="5" fill="#12ff7b"/><rect x="75" y="90" width="5" height="5" fill="#41ff75"/><rect x="80" y="90" width="5" height="5" fill="#5bff6f"/><rect x="85" y="90" width="5" height="5" fill="#70ff68"/><rect x="90" y="90" width="5" height="5" fill="#82ff60"/><rect x="95" y="90" width="5" height="5" fill="#92ff57"/><rect x="100" y="90" width="5" height="5" fill="#a1ff4d"/><rect x="105" y="90" width="5" height="5" fill="#afff41"/><rect x="110" y="90" width="5" height="5" fill="#bcff31"/><rect x="115" y="90" width="5" height="5" fill="#c9ff17"/><rect x="120" y="90" width="5" height="5" fill="#d6ff00"/><rect x="125" y="90" width="5" height="5" fill="#e2ff00"/><rect x="130" y="90" width="5" height="5" fill="#efff00"/><rect x="135" y="90" width="5" height="5" fill="#fbff00"/><rect x="140" y="90" width="5" height="5" fill="#fff800"/><rect x="145" y="90" width="5" height="5" fill="#ffed00"/><rect x="150" y="90" width="5" height="5" fill="#ffe300"/><rect x="155" y="90" width="5" height="5" fill="#ffda00"/><rect x="160" y="90" width="5" height="5" fill="#ffd200"/><rect x="165" y="90" width="5" height="5" fill="#ffca00"/><rect x="170" y="90" width="5" height="5" fill="#ffc300"/><rect x="175" y="90" width="5" height="5" fill="#ffbc00"/><rect x="180" y="90" width="5" height="5" fill="#ffb600"/><rect x="185" y="90" width="5" height="5" fill="#ffb000"/><rect x="190" y="90" width="5" height="5" fill="#ffaa00"/><rect x="195" y="90" width="5" height="5" fill="#ffa500"/><rect x="200" y="90" width="5" height="5" fill="#ffa000"/><rect x="205" y="90" width="5" height="5" fill="#ff9b00"/><rect x="210" y="90" width="5" height="5" fill="#ff9600"/><rect x="0" y="95" width="5" height="5" fill="#00ffb7"/><rect x="5" y="95" width="5" height="5" fill="#00ffb5"/><rect x="10" y="95" width="5" height="5" fill="#00ffb2"/><rect x="15" y="95" width="5" height="5" fill="#00ffaf"/><rect x="20" y="95" width="5" height="5" fill="#00ffac"/><rect x="25" y="95" width="5" height="5" fill="#00ffa9"/><rect x="30" y="95" width="5" height="5" fill="#00ffa6"/><rect x="35" y="95" width="5" height="5" fill="#00ffa2"/><rect x="40" y="95" width="5" height="5" fill="#00ff9f"/><rect x="45" y="95" width="5" height="5" fill="#00ff9b"/><rect x="50" y="95" width="5" height="5" fill="#00ff97"/><rect x="55" y="95" width="5" height="5" fill="#00ff92"/><rect x="60" y="95" width="5" height="5" fill="#00ff8e"/><rect x="65" y="95" width="5" height="5" fill="#00ff89"/><rect x="70" y="95" width="5" height="5" fill="#1fff84"/><rect x="75" y="95" width="5" height="5" fill="#47ff7e"/><rect x="80" y="95" width="5" height="5" fill="#60ff78"/><rect x="85" y="95" width="5" height="5" fill="#74ff72"/><rect x="90" y="95" width="5" height="5" fill="#86ff6a"/><rect x="95" y="95" width="5" height="5" fill="#97ff62"/><rect x="100" y="95" width="5" height="5" fill="#a6ff5a"/><rect x="105" y="95" width="5" height="5" fill="#b4ff4f"/><rect x="110" y="95" width="5" height="5" fill="#c2ff43"/><rect x="115" y="95" width="5" height="5" fill="#cfff33"/><rect x="120" y="95" width="5" height="5" fill="#dcff19"/><rect x="125" y="95" width="5" height="5" fill="#e9ff00"/><rect x="130" y="95" width="5" height="5" fill="#f5ff00"/><rect x="135" y="95" width="5" height="5" fill="#fffd00"/><rect x="140" y="95" width="5" height="5" fill="#fff100"/><rect x="145" y="95" width="5" height="5" fill="#ffe700"/><rect x="150" y="95" width="5" height="5" fill="#ffdd00"/><rect x="155" y="95" width="5" height="5" fill="#ffd400"/><rect x="160" y="95" width="5" height="5" fill="#ffcc00"/><rect x="165" y="95" width="5" height="5" fill="#ffc500"/><rect x="170" y="95" width="5" height="5" fill="#ffbe00"/><rect x="175" y="95" width="5" height="5" fill="#ffb700"/><rect x="180" y="95" width="5" height="5" fill="#ffb100"/><rect x="185" y="95" width="5" height="5" fill="#ffab00"/><rect x="190" y="95" width="5" height="5" fill="#ffa500"/><rect x="195" y="95" width="5" height="5" fill="#ffa000"/><rect x="200" y="95" width="5" height="5" fill="#ff9b00"/><rect x="205" y="95" width="5" height="5" fill="#ff9600"/><rect x="210" y="95" width="5" height="5" fill="#ff9100"/><rect x="0" y="100" width="5" height="5" fill="#00ffbe"/><rect x="5" y="100" width="5" height="5" fill="#00ffbb"/><rect x="10" y="100" width="5" height="5" fill="#00ffb9"/><rect x="15" y="100" width="5" height="5" fill="#00ffb6"/><rect x="20" y="100" width="5" height="5" fill="#00ffb3"/><rect x="25" y="100" width="5" height="5" fill="#00ffb0"/><rect x="30" y="100" width="5" height="5" fill="#00ffad"/><rect x="35" y="100" width="5" height="5" fill="#00ffaa"/><rect x="40" y="100" width="5" height="5" fill="#00ffa6"/><rect x="45" y="100" width="5" height="5" fill="#00ffa2"/><rect x="50" y="100" width="5" height="5" fill="#00ff9f"/><rect x="55" y="100" width="5" height="5" fill="#00ff9a"/><rect x="60" y="100" width="5" height="5" fill="#00ff96"/><rect x="65" y="100" width="5" height="5" fill="#00ff92"/><rect x="70" y="100" width="5" height="5" fill="#28ff8d"/><rect x="75" y="100" width="5" height="5" fill="#4cff87"/><rect x="80" y="100" width="5" height="5" fill="#65ff82"/><rect x="85" y="100" width="5" height="5" fill="#79ff7c"/><rect x="90" y="100" width="5" height="5" fill="#8bff75"/><rect x="95" y="100" width="5" height="5" fill="#9cff6e"/><rect x="100" y="100" width="5" height="5" fill="#abff65"/><rect x="105" y="100" width="5" height="5" fill="#baff5c"/><rect x="110" y="100" width="5" height="5" fill="#c8ff52"/><rect x="115" y="100" width="5" height="5" fill="#d5ff45"/><rect x="120" y="100" width="5" height="5" fill="#e2ff35"/><rect x="125" y="100" width="5" height="5" fill="#efff1a"/><rect x="130" y="100" width="5" height="5" fill="#fcff00"/><rect x="135" y="100" width="5" height="5" fill="#fff600"/><rect x="140" y="100" width="5" height="5" fill="#ffea00"/><rect x="145" y="100" width="5" height="5" fill="#ffe000"/><rect x="150" y="100" width="5" height="5" fill="#ffd700"/><rect x="155" y="100" width="5" height="5" fill="#ffcf00"/><rect x="160" y="100" width="5" height="5" fill="#ffc700"/><rect x="165" y="100" width="5" height="5" fill="#ffbf00"/><rect x="170" y="100" width="5" height="5" fill="#ffb800"/><rect x="175" y="100" width="5" height="5" fill="#ffb200"/><rect x="180" y="100" width="5" height="5" fill="#ffac00"/><rect x="185" y="100" width="5" height="5" fill="#ffa600"/><rect x="190" y="100" width="5" height="5" fill="#ffa000"/><rect x="195" y="100" width="5" height="5" fill="#ff9b00"/><rect x="200" y="100" width="5" height="5" fill="#ff9600"/><rect x="205" y="100" width="5" height="5" fill="#ff9100"/><rect x="210" y="100" width="5" height="5" fill="#ff8c00"/><rect x="0" y="105" width="5" height="5" fill="#00ffc5"/><rect x="5" y="105" width="5" height="5" fill="#00ffc2"/><rect x="10" y="105" width="5" height="5" fill="#00ffc0"/><rect x="15" y="105" width="5" height="5" fill="#00ffbd"/><rect x="20" y="105" width="5" height="5" fill="#00ffba"/><rect x="25" y="105" width="5" height="5" fill="#00ffb7"/><rect x="30" y="105" width="5" height="5" fill="#00ffb4"/><rect x="35" y="105" width="5" height="5" fill="#00ffb1"/><rect x="40" y="105" width="5" height="5" fill="#00ffae"/><rect x="45" y="105" width="5" height="5" fill="#00ffaa"/><rect x="50" y="105" width="5" height="5" fill="#00ffa7"/><rect x="55" y="105" width="5" height="5" fill="#00ffa3"/><rect x="60" y="105" width="5" height="5" fill="#00ff9f"/><rect x="65" y="105" width="5" height="5" fill="#00ff9a"/><rect x="70" y="105" width="5" height="5" fill="#30ff96"/><rect x="75" y="105" width="5" height="5" fill="#52ff91"/><rect x="80" y="105" width="5" height="5" fill="#6aff8b"/><rect x="85" y="105" width="5" height="5" fill="#7eff85"/><rect x="90" y="105" width="5" height="5" fill="#90ff7f"/><rect x="95" y="105" width="5" height="5" fill="#a1ff78"/><rect x="100" y="105" width="5" height="5" fill="#b1ff71"/><rect x="105" y="105" width="5" height="5" fill="#bfff69"/><rect x="110" y="105" width="5" height="5" fill="#ceff5f"/><rect x="115" y="105" width="5" height="5" fill="#dcff54"/><rect x="120" y="105" width="5" height="5" fill="#e9ff47"/><rect x="125" y="105" width="5" height="5" fill="#f6ff37"/><rect x="130" y="105" width="5" height="5" fill="#fffb1c"/><rect x="135" y="105" width="5" height="5" fill="#ffef00"/><rect x="140" y="105" width="5" height="5" fill="#ffe400"/><rect x="145" y="105" width="5" height="5" fill="#ffda00"/><rect x="150" y="105" width="5" height="5" fill="#ffd100"/><rect x="155" y="105" width="5" height="5" fill="#ffc800"/><rect x="160" y="105" width="5" height="5" fill="#ffc100"/><rect x="165" y="105" width="5" height="5" fill="#ffb900"/><rect x="170" y="105" width="5" height="5" fill="#ffb300"/><rect x="175" y="105" width="5" height="5" fill="#ffac00"/><rect x="180" y="105" width="5" height="5" fill="#ffa600"/><rect x="185" y="105" width="5" height="5" fill="#ffa000"/><rect x="190" y="105" width="5" height="5" fill="#ff9b00"/><rect x="195" y="105" width="5" height="5" fill="#ff9600"/><rect x="200" y="105" width="5" height="5" fill="#ff9100"/><rect x="205" y="105" width="5" height="5" fill="#ff8c00"/><rect x="210" y="105" width="5" height="5" fill="#ff8700"/><rect x="0" y="110" width="5" height="5" fill="#00ffcb"/><rect x="5" y="110" width="5" height="5" fill="#00ffc9"/><rect x="10" y="110" width="5" height="5" fill="#00ffc7"/><rect x="15" y="110" width="5" height="5" fill="#00ffc4"/><rect x="20" y="110" width="5" height="5" fill="#00ffc1"/><rect x="25" y="110" width="5" height="5" fill="#00ffbf"/><rect x="30" y="110" width="5" height="5" fill="#00ffbc"/><rect x="35" y="110" width="5" height="5" fill="#00ffb9"/><rect x="40" y="110" width="5" height="5" fill="#00ffb6"/><rect x="45" y="110" width="5" height="5" fill="#00ffb2"/><rect x="50" y="110" width="5" height="5" fill="#00ffaf"/><rect x="55" y="110" width="5" height="5" fill="#00ffab"/><rect x="60" y="110" width="5" height="5" fill="#00ffa7"/><rect x="65" y="110" width="5" height="5" fill="#00ffa3"/><rect x="70" y="110" width="5" height="5" fill="#37ff9f"/><rect x="75" y="110" width="5" height="5" fill="#58ff9a"/><rect x="80" y="110" width="5" height="5" fill="#6fff95"/><rect x="85" y="110" width="5" height="5" fill="#84ff8f"/><rect x="90" y="110" width="5" height="5" fill="#96ff8a"/><rect x="95" y="110" width="5" height="5" fill="#a7ff83"/><rect x="100" y="110" width="5" height="5" fill="#b6ff7c"/><rect x="105" y="110" width="5" height="5" fill="#c6ff75"/><rect x="110" y="110" width="5" height="5" fill="#d4ff6c"/><rect x="115" y="110" width="5" height="5" fill="#e2ff63"/><rect x="120" y="110" width="5" height="5" fill="#f0ff58"/><rect x="125" y="110" width="5" height="5" fill="#feff4a"/><rect x="130" y="110" width="5" height="5" fill="#fff336"/><rect x="135" y="110" width="5" height="5" fill="#ffe81b"/><rect x="140" y="110" width="5" height="5" fill="#ffdd00"/><rect x="145" y="110" width="5" height="5" fill="#ffd300"/><rect x="150" y="110" width="5" height="5" fill="#ffcb00"/><rect x="155" y="110" width="5" height="5" fill="#ffc200"/><rect x="160" y="110" width="5" height="5" fill="#ffbb00"/><rect x="165" y="110" width="5" height="5" fill="#ffb400"/><rect x="170" y="110" width="5" height="5" fill="#ffad00"/><rect x="175" y="110" width="5" height="5" fill="#ffa700"/><rect x="180" y="110" width="5" height="5" fill="#ffa100"/><rect x="185" y="110" width="5" height="5" fill="#ff9b00"/><rect x="190" y="110" width="5" height="5" fill="#ff9600"/><rect x="195" y="110" width="5" height="5" fill="#ff9000"/><rect x="200" y="110" width="5" height="5" fill="#ff8c00"/><rect x="205" y="110" width="5" height="5" fill="#ff8700"/><rect x="210" y="110" width="5" height="5" fill="#ff8200"/><rect x="0" y="115" width="5" height="5" fill="#00ffd2"/><rect x="5" y="115" width="5" height="5" fill="#00ffd0"/><rect x="10" y="115" width="5" height="5" fill="#00ffce"/><rect x="15" y="115" width="5" height="5" fill="#00ffcb"/><rect x="20" y="115" width="5" height="5" fill="#00ffc9"/><rect x="25" y="115" width="5" height="5" fill="#00ffc6"/><rect x="30" y="115" width="5" height="5" fill="#00ffc4"/><rect x="35" y="115" width="5" height="5" fill="#00ffc1"/><rect x="40" y="115" width="5" height="5" fill="#00ffbe"/><rect x="45" y="115" width="5" height="5" fill="#00ffba"/><rect x="50" y="115" width="5" height="5" fill="#00ffb7"/><rect x="55" y="115" width="5" height="5" fill="#00ffb4"/><rect x="60" y="115" width="5" height="5" fill="#00ffb0"/><rect x="65" y="115" width="5" height="5" fill="#00ffac"/><rect x="70" y="115" width="5" height="5" fill="#3effa8"/><rect x="75" y="115" width="5" height="5" fill="#5dffa3"/><rect x="80" y="115" width="5" height="5" fill="#75ff9f"/><rect x="85" y="115" width="5" height="5" fill="#89ff99"/><rect x="90" y="115" width="5" height="5" fill="#9cff94"/><rect x="95" y="115" width="5" height="5" fill="#adff8e"/><rect x="100" y="115" width="5" height="5" fill="#bdff88"/><rect x="105" y="115" width="5" height="5" fill="#ccff81"/><rect x="110" y="115" width="5" height="5" fill="#dbff79"/><rect x="115" y="115" width="5" height="5" fill="#e9ff70"/><rect x="120" y="115" width="5" height="5" fill="#f8ff66"/><rect x="125" y="115" width="5" height="5" fill="#fff859"/><rect x="130" y="115" width="5" height="5" fill="#ffec47"/><rect x="135" y="115" width="5" height="5" fill="#ffe034"/><rect x="140" y="115" width="5" height="5" fill="#ffd61b"/><rect x="145" y="115" width="5" height="5" fill="#ffcd00"/><rect x="150" y="115" width="5" height="5" fill="#ffc400"/><rect x="155" y="115" width="5" height="5" fill="#ffbc00"/><rect x="160" y="115" width="5" height="5" fill="#ffb500"/><rect x="165" y="115" width="5" height="5" fill="#ffae00"/><rect x="170" y="115" width="5" height="5" fill="#ffa700"/><rect x="175" y="115" width="5" height="5" fill="#ffa100"/><rect x="180" y="115" width="5" height="5" fill="#ff9b00"/><rect x="185" y="115" width="5" height="5" fill="#ff9500"/><rect x="190" y="115" width="5" height="5" fill="#ff9000"/><rect x="195" y="115" width="5" height="5" fill="#ff8b00"/><rect x="200" y="115" width="5" height="5" fill="#ff8600"/><rect x="205" y="115" width="5" height="5" fill="#ff8100"/><rect x="210" y="115" width="5" height="5" fill="#ff7d00"/><rect x="0" y="120" width="5" height="5" fill="#00ffda"/><rect x="5" y="120" width="5" height="5" fill="#00ffd8"/><rect x="10" y="120" width="5" height="5" fill="#00ffd5"/><rect x="15" y="120" width="5" height="5" fill="#00ffd3"/><rect x="20" y="120" width="5" height="5" fill="#00ffd1"/><rect x="25" y="120" width="5" height="5" fill="#00ffce"/><rect x="30" y="120" width="5" height="5" fill="#00ffcc"/><rect x="35" y="120" width="5" height="5" fill="#00ffc9"/><rect x="40" y="120" width="5" height="5" fill="#00ffc6"/><rect x="45" y="120" width="5" height="5" fill="#00ffc3"/><rect x="50" y="120" width="5" height="5" fill="#00ffc0"/><rect x="55" y="120" width="5" height="5" fill="#00ffbc"/><rect x="60" y="120" width="5" height="5" fill="#00ffb9"/><rect x="65" y="120" width="5" height="5" fill="#00ffb5"/><rect x="70" y="120" width="5" height="5" fill="#45ffb1"/><rect x="75" y="120" width="5" height="5" fill="#63ffad"/><rect x="80" y="120" width="5" height="5" fill="#7bffa9"/><rect x="85" y="120" width="5" height="5" fill="#8fffa4"/><rect x="90" y="120" width="5" height="5" fill="#a1ff9f"/><rect x="95" y="120" width="5" height="5" fill="#b3ff99"/><rect x="100" y="120" width="5" height="5" fill="#c3ff93"/><rect x="105" y="120" width="5" height="5" fill="#d3ff8d"/><rect x="110" y="120" width="5" height="5" fill="#e2ff85"/><rect x="115" y="120" width="5" height="5" fill="#f1ff7d"/><rect x="120" y="120" width="5" height="5" fill="#fffe74"/><rect x="125" y="120" width="5" height="5" fill="#fff164"/><rect x="130" y="120" width="5" height="5" fill="#ffe455"/><rect x="135" y="120" width="5" height="5" fill="#ffd945"/><rect x="140" y="120" width="5" height="5" fill="#ffcf33"/><rect x="145" y="120" width="5" height="5" fill="#ffc61a"/><rect x="150" y="120" width="5" height="5" fill="#ffbe00"/><rect x="155" y="120" width="5" height="5" fill="#ffb600"/><rect x="160" y="120" width="5" height="5" fill="#ffae00"/><rect x="165" y="120" width="5" height="5" fill="#ffa800"/><rect x="170" y="120" width="5" height="5" fill="#ffa100"/><rect x="175" y="120" width="5" height="5" fill="#ff9b00"/><rect x="180" y="120" width="5" height="5" fill="#ff9500"/><rect x="185" y="120" width="5" height="5" fill="#ff9000"/><rect x="190" y="120" width="5" height="5" fill="#ff8a00"/><rect x="195" y="120" width="5" height="5" fill="#ff8500"/><rect x="200" y="120" width="5" height="5" fill="#ff8100"/><rect x="205" y="120" width="5" height="5" fill="#ff7c00"/><rect x="210" y="120" width="5" height="5" fill="#ff7700"/><rect x="0" y="125" width="5" height="5" fill="#00ffe1"/><rect x="5" y="125" width="5" height="5" fill="#00ffdf"/><rect x="10" y="125" width="5" height="5" fill="#00ffdd"/><rect x="15" y="125" width="5" height="5" fill="#00ffdb"/><rect x="20" y="125" width="5" height="5" fill="#00ffd9"/><rect x="25" y="125" width="5" height="5" fill="#00ffd6"/><rect x="30" y="125" width="5" height="5" fill="#00ffd4"/><rect x="35" y="125" width="5" height="5" fill="#00ffd1"/><rect x="40" y="125" width="5" height="5" fill="#00ffcf"/><rect x="45" y="125" width="5" height="5" fill="#00ffcc"/><rect x="50" y="125" width="5" height="5" fill="#00ffc9"/><rect x="55" y="125" width="5" height="5" fill="#00ffc6"/><rect x="60" y="125" width="5" height="5" fill="#00ffc2"/><rect x="65" y="125" width="5" height="5" fill="#1bffbf"/><rect x="70" y="125" width="5" height="5" fill="#4cffbb"/><rect x="75" y="125" width="5" height="5" fill="#69ffb7"/><rect x="80" y="125" width="5" height="5" fill="#80ffb3"/><rect x="85" y="125" width="5" height="5" fill="#95ffae"/><rect x="90" y="125" width="5" height="5" fill="#a8ffa9"/><rect x="95" y="125" width="5" height="5" fill="#b9ffa4"/><rect x="100" y="125" width="5" height="5" fill="#caff9f"/><rect x="105" y="125" width="5" height="5" fill="#daff99"/><rect x="110" y="125" width="5" height="5" fill="#eaff92"/><rect x="115" y="125" width="5" height="5" fill="#f9ff8b"/><rect x="120" y="125" width="5" height="5" fill="#fff67e"/><rect x="125" y="125" width="5" height="5" fill="#ffe96f"/><rect x="130" y="125" width="5" height="5" fill="#ffdd60"/><rect x="135" y="125" width="5" height="5" fill="#ffd252"/><rect x="140" y="125" width="5" height="5" fill="#ffc842"/><rect x="145" y="125" width="5" height="5" fill="#ffbf31"/><rect x="150" y="125" width="5" height="5" fill="#ffb71a"/><rect x="155" y="125" width="5" height="5" fill="#ffaf00"/><rect x="160" y="125" width="5" height="5" fill="#ffa800"/><rect x="165" y="125" width="5" height="5" fill="#ffa100"/><rect x="170" y="125" width="5" height="5" fill="#ff9b00"/><rect x="175" y="125" width="5" height="5" fill="#ff9500"/><rect x="180" y="125" width="5" height="5" fill="#ff8f00"/><rect x="185" y="125" width="5" height="5" fill="#ff8a00"/><rect x="190" y="125" width="5" height="5" fill="#ff8500"/><rect x="195" y="125" width="5" height="5" fill="#ff8000"/><rect x="200" y="125" width="5" height="5" fill="#ff7b00"/><rect x="205" y="125" width="5" height="5" fill="#ff7600"/><rect x="210" y="125" width="5" height="5" fill="#ff7200"/><rect x="0" y="130" width="5" height="5" fill="#00ffe9"/><rect x="5" y="130" width="5" height="5" fill="#00ffe7"/><rect x="10" y="130" width="5" height="5" fill="#00ffe5"/><rect x="15" y="130" width="5" height="5" fill="#00ffe3"/><rect x="20" y="130" width="5" height="5" fill="#00ffe1"/><rect x="25" y="130" width="5" height="5" fill="#00ffdf"/><rect x="30" y="130" width="5" height="5" fill="#00ffdc"/><rect x="35" y="130" width="5" height="5" fill="#00ffda"/><rect x="40" y="130" width="5" height="5" fill="#00ffd7"/><rect x="45" y="130" width="5" height="5" fill="#00ffd5"/><rect x="50" y="130" width="5" height="5" fill="#00ffd2"/><rect x="55" y="130" width="5" height="5" fill="#00ffcf"/><rect x="60" y="130" width="5" height="5" fill="#00ffcc"/><rect x="65" y="130" width="5" height="5" fill="#27ffc8"/><rect x="70" y="130" width="5" height="5" fill="#53ffc5"/><rect x="75" y="130" width="5" height="5" fill="#6fffc1"/><rect x="80" y="130" width="5" height="5" fill="#87ffbd"/><rect x="85" y="130" width="5" height="5" fill="#9bffb9"/><rect x="90" y="130" width="5" height="5" fill="#aeffb5"/><rect x="95" y="130" width="5" height="5" fill="#c0ffb0"/><rect x="100" y="130" width="5" height="5" fill="#d1ffaa"/><rect x="105" y="130" width="5" height="5" fill="#e2ffa5"/><rect x="110" y="130" width="5" height="5" fill="#f2ff9f"/><rect x="115" y="130" width="5" height="5" fill="#fffc96"/><rect x="120" y="130" width="5" height="5" fill="#ffee87"/><rect x="125" y="130" width="5" height="5" fill="#ffe178"/><rect x="130" y="130" width="5" height="5" fill="#ffd56a"/><rect x="135" y="130" width="5" height="5" fill="#ffcb5c"/><rect x="140" y="130" width="5" height="5" fill="#ffc14f"/><rect x="145" y="130" width="5" height="5" fill="#ffb840"/><rect x="150" y="130" width="5" height="5" fill="#ffb030"/><rect x="155" y="130" width="5" height="5" fill="#ffa91a"/><rect x="160" y="130" width="5" height="5" fill="#ffa200"/><rect x="165" y="130" width="5" height="5" fill="#ff9b00"/><rect x="170" y="130" width="5" height="5" fill="#ff9500"/><rect x="175" y="130" width="5" height="5" fill="#ff8f00"/><rect x="180" y="130" width="5" height="5" fill="#ff8900"/><rect x="185" y="130" width="5" height="5" fill="#ff8400"/><rect x="190" y="130" width="5" height="5" fill="#ff7f00"/><rect x="195" y="130" width="5" height="5" fill="#ff7a00"/><rect x="200" y="130" width="5" height="5" fill="#ff7500"/><rect x="205" y="130" width="5" height="5" fill="#ff7000"/><rect x="210" y="130" width="5" height="5" fill="#ff6c00"/><rect x="0" y="135" width="5" height="5" fill="#00fff1"/><rect x="5" y="135" width="5" height="5" fill="#00ffef"/><rect x="10" y="135" width="5" height="5" fill="#00ffed"/><rect x="15" y="135" width="5" height="5" fill="#00ffec"/><rect x="20" y="135" width="5" height="5" fill="#00ffea"/><rect x="25" y="135" width="5" height="5" fill="#00ffe8"/><rect x="30" y="135" width="5" height="5" fill="#00ffe5"/><rect x="35" y="135" width="5" height="5" fill="#00ffe3"/><rect x="40" y="135" width="5" height="5" fill="#00ffe1"/><rect x="45" y="135" width="5" height="5" fill="#00ffde"/><rect x="50" y="135" width="5" height="5" fill="#00ffdc"/><rect x="55" y="135" width="5" height="5" fill="#00ffd9"/><rect x="60" y="135" width="5" height="5" fill="#00ffd6"/><rect x="65" y="135" width="5" height="5" fill="#31ffd3"/><rect x="70" y="135" width="5" height="5" fill="#59ffcf"/><rect x="75" y="135" width="5" height="5" fill="#75ffcc"/><rect x="80" y="135" width="5" height="5" fill="#8dffc8"/><rect x="85" y="135" width="5" height="5" fill="#a2ffc4"/><rect x="90" y="135" width="5" height="5" fill="#b5ffc0"/><rect x="95" y="135" width="5" height="5" fill="#c8ffbc"/><rect x="100" y="135" width="5" height="5" fill="#d9ffb7"/><rect x="105" y="135" width="5" height="5" fill="#eaffb1"/><rect x="110" y="135" width="5" height="5" fill="#fbffac"/><rect x="115" y="135" width="5" height="5" fill="#fff39e"/><rect x="120" y="135" width="5" height="5" fill="#ffe58e"/><rect x="125" y="135" width="5" height="5" fill="#ffd980"/><rect x="130" y="135" width="5" height="5" fill="#ffcd73"/><rect x="135" y="135" width="5" height="5" fill="#ffc366"/><rect x="140" y="135" width="5" height="5" fill="#ffba59"/><rect x="145" y="135" width="5" height="5" fill="#ffb14c"/><rect x="150" y="135" width="5" height="5" fill="#ffaa3e"/><rect x="155" y="135" width="5" height="5" fill="#ffa22f"/><rect x="160" y="135" width="5" height="5" fill="#ff9b1a"/><rect x="165" y="135" width="5" height="5" fill="#ff9500"/><rect x="170" y="135" width="5" height="5" fill="#ff8e00"/><rect x="175" y="135" width="5" height="5" fill="#ff8900"/><rect x="180" y="135" width="5" height="5" fill="#ff8300"/><rect x="185" y="135" width="5" height="5" fill="#ff7e00"/><rect x="190" y="135" width="5" height="5" fill="#ff7800"/><rect x="195" y="135" width="5" height="5" fill="#ff7300"/><rect x="200" y="135" width="5" height="5" fill="#ff6f00"/><rect x="205" y="135" width="5" height="5" fill="#ff6a00"/><rect x="210" y="135" width="5" height="5" fill="#ff6500"/><rect x="0" y="140" width="5" height="5" fill="#00fff9"/><rect x="5" y="140" width="5" height="5" fill="#00fff8"/><rect x="10" y="140" width="5" height="5" fill="#00fff6"/><rect x="15" y="140" width="5" height="5" fill="#00fff4"/><rect x="20" y="140" width="5" height="5" fill="#00fff3"/><rect x="25" y="140" width="5" height="5" fill="#00fff1"/><rect x="30" y="140" width="5" height="5" fill="#00ffef"/><rect x="35" y="140" width="5" height="5" fill="#00ffed"/><rect x="40" y="140" width="5" height="5" fill="#00ffea"/><rect x="45" y="140" width="5" height="5" fill="#00ffe8"/><rect x="50" y="140" width="5" height="5" fill="#00ffe6"/><rect x="55" y="140" width="5" height="5" fill="#00ffe3"/><rect x="60" y="140" width="5" height="5" fill="#00ffe0"/><rect x="65" y="140" width="5" height="5" fill="#3affdd"/><rect x="70" y="140" width="5" height="5" fill="#60ffda"/><rect x="75" y="140" width="5" height="5" fill="#7cffd7"/><rect x="80" y="140" width="5" height="5" fill="#94ffd4"/><rect x="85" y="140" width="5" height="5" fill="#a9ffd0"/><rect x="90" y="140" width="5" height="5" fill="#bdffcc"/><rect x="95" y="140" width="5" height="5" fill="#d0ffc8"/><rect x="100" y="140" width="5" height="5" fill="#e2ffc3"/><rect x="105" y="140" width="5" height="5" fill="#f3ffbf"/><rect x="110" y="140" width="5" height="5" fill="#fff9b5"/><rect x="115" y="140" width="5" height="5" fill="#ffeaa5"/><rect x="120" y="140" width="5" height="5" fill="#ffdc96"/><rect x="125" y="140" width="5" height="5" fill="#ffd088"/><rect x="130" y="140" width="5" height="5" fill="#ffc67b"/><rect x="135" y="140" width="5" height="5" fill="#ffbc6e"/><rect x="140" y="140" width="5" height="5" fill="#ffb362"/><rect x="145" y="140" width="5" height="5" fill="#ffaa56"/><rect x="150" y="140" width="5" height="5" fill="#ffa24a"/><rect x="155" y="140" width="5" height="5" fill="#ff9b3d"/><rect x="160" y="140" width="5" height="5" fill="#ff942e"/><rect x="165" y="140" width="5" height="5" fill="#ff8e1a"/><rect x="170" y="140" width="5" height="5" fill="#ff8800"/><rect x="175" y="140" width="5" height="5" fill="#ff8200"/><rect x="180" y="140" width="5" height="5" fill="#ff7c00"/><rect x="185" y="140" width="5" height="5" fill="#ff7700"/><rect x="190" y="140" width="5" height="5" fill="#ff7200"/><rect x="195" y="140" width="5" height="5" fill="#ff6d00"/><rect x="200" y="140" width="5" height="5" fill="#ff6800"/><rect x="205" y="140" width="5" height="5" fill="#ff6300"/><rect x="210" y="140" width="5" height="5" fill="#ff5f00"/><rect x="0" y="145" width="5" height="5" fill="#00fcff"/><rect x="5" y="145" width="5" height="5" fill="#00fdff"/><rect x="10" y="145" width="5" height="5" fill="#00ffff"/><rect x="15" y="145" width="5" height="5" fill="#00fffe"/><rect x="20" y="145" width="5" height="5" fill="#00fffc"/><rect x="25" y="145" width="5" height="5" fill="#00fffa"/><rect x="30" y="145" width="5" height="5" fill="#00fff8"/><rect x="35" y="145" width="5" height="5" fill="#00fff6"/><rect x="40" y="145" width="5" height="5" fill="#00fff4"/><rect x="45" y="145" width="5" height="5" fill="#00fff2"/><rect x="50" y="145" width="5" height="5" fill="#00fff0"/><rect x="55" y="145" width="5" height="5" fill="#00ffee"/><rect x="60" y="145" width="5" height="5" fill="#00ffeb"/><rect x="65" y="145" width="5" height="5" fill="#43ffe9"/><rect x="70" y="145" width="5" height="5" fill="#67ffe6"/><rect x="75" y="145" width="5" height="5" fill="#83ffe3"/><rect x="80" y="145" width="5" height="5" fill="#9bffe0"/><rect x="85" y="145" width="5" height="5" fill="#b1ffdc"/><rect x="90" y="145" width="5" height="5" fill="#c5ffd9"/><rect x="95" y="145" width="5" height="5" fill="#d8ffd5"/><rect x="100" y="145" width="5" height="5" fill="#ebffd1"/><rect x="105" y="145" width="5" height="5" fill="#fdffcc"/><rect x="110" y="145" width="5" height="5" fill="#fff0bc"/><rect x="115" y="145" width="5" height="5" fill="#ffe1ab"/><rect x="120" y="145" width="5" height="5" fill="#ffd49d"/><rect x="125" y="145" width="5" height="5" fill="#ffc88f"/><rect x="130" y="145" width="5" height="5" fill="#ffbe82"/><rect x="135" y="145" width="5" height="5" fill="#ffb476"/><rect x="140" y="145" width="5" height="5" fill="#ffab6a"/><rect x="145" y="145" width="5" height="5" fill="#ffa35f"/><rect x="150" y="145" width="5" height="5" fill="#ff9b53"/><rect x="155" y="145" width="5" height="5" fill="#ff9448"/><rect x="160" y="145" width="5" height="5" fill="#ff8d3b"/><rect x="165" y="145" width="5" height="5" fill="#ff872d"/><rect x="170" y="145" width="5" height="5" fill="#ff8119"/><rect x="175" y="145" width="5" height="5" fill="#ff7b00"/><rect x="180" y="145" width="5" height="5" fill="#ff7600"/><rect x="185" y="145" width="5" height="5" fill="#ff7000"/><rect x="190" y="145" width="5" height="5" fill="#ff6b00"/><rect x="195" y="145" width="5" height="5" fill="#ff6600"/><rect x="200" y="145" width="5" height="5" fill="#ff6100"/><rect x="205" y="145" width="5" height="5" fill="#ff5d00"/><rect x="210" y="145" width="5" height="5" fill="#ff5800"/><rect x="0" y="150" width="5" height="5" fill="#00f3ff"/><rect x="5" y="150" width="5" height="5" fill="#00f4ff"/><rect x="10" y="150" width="5" height="5" fill="#00f6ff"/><rect x="15" y="150" width="5" height="5" fill="#00f7ff"/><rect x="20" y="150" width="5" height="5" fill="#00f8ff"/><rect x="25" y="150" width="5" height="5" fill="#00faff"/><rect x="30" y="150" width="5" height="5" fill="#00fbff"/><rect x="35" y="150" width="5" height="5" fill="#00fdff"/><rect x="40" y="150" width="5" height="5" fill="#00ffff"/><rect x="45" y="150" width="5" height="5" fill="#00fffd"/><rect x="50" y="150" width="5" height="5" fill="#00fffb"/><rect x="55" y="150" width="5" height="5" fill="#00fff9"/><rect x="60" y="150" width="5" height="5" fill="#00fff7"/><rect x="65" y="150" width="5" height="5" fill="#4bfff5"/><rect x="70" y="150" width="5" height="5" fill="#6ffff2"/><rect x="75" y="150" width="5" height="5" fill="#8affef"/><rect x="80" y="150" width="5" height="5" fill="#a3ffed"/><rect x="85" y="150" width="5" height="5" fill="#b9ffea"/><rect x="90" y="150" width="5" height="5" fill="#ceffe6"/><rect x="95" y="150" width="5" height="5" fill="#e2ffe3"/><rect x="100" y="150" width="5" height="5" fill="#f5ffdf"/><rect x="105" y="150" width="5" height="5" fill="#fff6d4"/><rect x="110" y="150" width="5" height="5" fill="#ffe6c2"/><rect x="115" y="150" width="5" height="5" fill="#ffd8b2"/><rect x="120" y="150" width="5" height="5" fill="#ffcba3"/><rect x="125" y="150" width="5" height="5" fill="#ffc096"/><rect x="130" y="150" width="5" height="5" fill="#ffb589"/><rect x="135" y="150" width="5" height="5" fill="#ffac7d"/><rect x="140" y="150" width="5" height="5" fill="#ffa372"/><rect x="145" y="150" width="5" height="5" fill="#ff9b67"/><rect x="150" y="150" width="5" height="5" fill="#ff945c"/><rect x="155" y="150" width="5" height="5" fill="#ff8d51"/><rect x="160" y="150" width="5" height="5" fill="#ff8646"/><rect x="165" y="150" width="5" height="5" fill="#ff803a"/><rect x="170" y="150" width="5" height="5" fill="#ff7a2c"/><rect x="175" y="150" width="5" height="5" fill="#ff7419"/><rect x="180" y="150" width="5" height="5" fill="#ff6f00"/><rect x="185" y="150" width="5" height="5" fill="#ff6900"/><rect x="190" y="150" width="5" height="5" fill="#ff6400"/><rect x="195" y="150" width="5" height="5" fill="#ff5f00"/><rect x="200" y="150" width="5" height="5" fill="#ff5a00"/><rect x="205" y="150" width="5" height="5" fill="#ff5500"/><rect x="210" y="150" width="5" height="5" fill="#ff5000"/><rect x="0" y="155" width="5" height="5" fill="#00ebff"/><rect x="5" y="155" width="5" height="5" fill="#00ecff"/><rect x="10" y="155" width="5" height="5" fill="#00edff"/><rect x="15" y="155" width="5" height="5" fill="#00eeff"/><rect x="20" y="155" width="5" height="5" fill="#00efff"/><rect x="25" y="155" width="5" height="5" fill="#00f0ff"/><rect x="30" y="155" width="5" height="5" fill="#00f1ff"/><rect x="35" y="155" width="5" height="5" fill="#00f3ff"/><rect x="40" y="155" width="5" height="5" fill="#00f4ff"/><rect x="45" y="155" width="5" height="5" fill="#00f6ff"/><rect x="50" y="155" width="5" height="5" fill="#00f7ff"/><rect x="55" y="155" width="5" height="5" fill="#00f9ff"/><rect x="60" y="155" width="5" height="5" fill="#12fbff"/><rect x="65" y="155" width="5" height="5" fill="#53fdff"/><rect x="70" y="155" width="5" height="5" fill="#76ffff"/><rect x="75" y="155" width="5" height="5" fill="#92fffd"/><rect x="80" y="155" width="5" height="5" fill="#abfffa"/><rect x="85" y="155" width="5" height="5" fill="#c2fff7"/><rect x="90" y="155" width="5" height="5" fill="#d7fff5"/><rect x="95" y="155" width="5" height="5" fill="#ecfff2"/><rect x="100" y="155" width="5" height="5" fill="#fffeee"/><rect x="105" y="155" width="5" height="5" fill="#ffecd9"/><rect x="110" y="155" width="5" height="5" fill="#ffdcc7"/><rect x="115" y="155" width="5" height="5" fill="#ffceb7"/><rect x="120" y="155" width="5" height="5" fill="#ffc2a9"/><rect x="125" y="155" width="5" height="5" fill="#ffb79c"/><rect x="130" y="155" width="5" height="5" fill="#ffad90"/><rect x="135" y="155" width="5" height="5" fill="#ffa484"/><rect x="140" y="155" width="5" height="5" fill="#ff9b79"/><rect x="145" y="155" width="5" height="5" fill="#ff946e"/><rect x="150" y="155" width="5" height="5" fill="#ff8c64"/><rect x="155" y="155" width="5" height="5" fill="#ff8559"/><rect x="160" y="155" width="5" height="5" fill="#ff7f4f"/><rect x="165" y="155" width="5" height="5" fill="#ff7844"/><rect x="170" y="155" width="5" height="5" fill="#ff7238"/><rect x="175" y="155" width="5" height="5" fill="#ff6d2b"/><rect x="180" y="155" width="5" height="5" fill="#ff6719"/><rect x="185" y="155" width="5" height="5" fill="#ff6200"/><rect x="190" y="155" width="5" height="5" fill="#ff5c00"/><rect x="195" y="155" width="5" height="5" fill="#ff5700"/><rect x="200" y="155" width="5" height="5" fill="#ff5200"/><rect x="205" y="155" width="5" height="5" fill="#ff4d00"/><rect x="210" y="155" width="5" height="5" fill="#ff4800"/><rect x="0" y="160" width="5" height="5" fill="#00e3ff"/><rect x="5" y="160" width="5" height="5" fill="#00e3ff"/><rect x="10" y="160" width="5" height="5" fill="#00e4ff"/><rect x="15" y="160" width="5" height="5" fill="#00e5ff"/><rect x="20" y="160" width="5" height="5" fill="#00e6ff"/><rect x="25" y="160" width="5" height="5" fill="#00e7ff"/><rect x="30" y="160" width="5" height="5" fill="#00e8ff"/><rect x="35" y="160" width="5" height="5" fill="#00e9ff"/><rect x="40" y="160" width="5" height="5" fill="#00eaff"/><rect x="45" y="160" width="5" height="5" fill="#00ebff"/><rect x="50" y="160" width="5" height="5" fill="#00ecff"/><rect x="55" y="160" width="5" height="5" fill="#00edff"/><rect x="60" y="160" width="5" height="5" fill="#23efff"/><rect x="65" y="160" width="5" height="5" fill="#57f0ff"/><rect x="70" y="160" width="5" height="5" fill="#78f2ff"/><rect x="75" y="160" width="5" height="5" fill="#94f4ff"/><rect x="80" y="160" width="5" height="5" fill="#adf6ff"/><rect x="85" y="160" width="5" height="5" fill="#c5f8ff"/><rect x="90" y="160" width="5" height="5" fill="#ddfaff"/><rect x="95" y="160" width="5" height="5" fill="#f4fdff"/><rect x="100" y="160" width="5" height="5" fill="#fff3f2"/><rect x="105" y="160" width="5" height="5" fill="#ffe1de"/><rect x="110" y="160" width="5" height="5" fill="#ffd2cd"/><rect x="115" y="160" width="5" height="5" fill="#ffc5bd"/><rect x="120" y="160" width="5" height="5" fill="#ffb9af"/><rect x="125" y="160" width="5" height="5" fill="#ffaea2"/><rect x="130" y="160" width="5" height="5" fill="#ffa496"/><rect x="135" y="160" width="5" height="5" fill="#ff9c8a"/><rect x="140" y="160" width="5" height="5" fill="#ff937f"/><rect x="145" y="160" width="5" height="5" fill="#ff8b75"/><rect x="150" y="160" width="5" height="5" fill="#ff846b"/><rect x="155" y="160" width="5" height="5" fill="#ff7d61"/><rect x="160" y="160" width="5" height="5" fill="#ff7757"/><rect x="165" y="160" width="5" height="5" fill="#ff714d"/><rect x="170" y="160" width="5" height="5" fill="#ff6b42"/><rect x="175" y="160" width="5" height="5" fill="#ff6537"/><rect x="180" y="160" width="5" height="5" fill="#ff5f2a"/><rect x="185" y="160" width="5" height="5" fill="#ff5a19"/><rect x="190" y="160" width="5" height="5" fill="#ff5400"/><rect x="195" y="160" width="5" height="5" fill="#ff4f00"/><rect x="200" y="160" width="5" height="5" fill="#ff4a00"/><rect x="205" y="160" width="5" height="5" fill="#ff4400"/><rect x="210" y="160" width="5" height="5" fill="#ff3f00"/><rect x="0" y="165" width="5" height="5" fill="#00daff"/><rect x="5" y="165" width="5" height="5" fill="#00dbff"/><rect x="10" y="165" width="5" height="5" fill="#00dcff"/><rect x="15" y="165" width="5" height="5" fill="#00dcff"/><rect x="20" y="165" width="5" height="5" fill="#00ddff"/><rect x="25" y="165" width="5" height="5" fill="#00ddff"/><rect x="30" y="165" width="5" height="5" fill="#00deff"/><rect x="35" y="165" width="5" height="5" fill="#00dfff"/><rect x="40" y="165" width="5" height="5" fill="#00e0ff"/><rect x="45" y="165" width="5" height="5" fill="#00e0ff"/><rect x="50" y="165" width="5" height="5" fill="#00e1ff"/><rect x="55" y="165" width="5" height="5" fill="#00e2ff"/><rect x="60" y="165" width="5" height="5" fill="#2de3ff"/><rect x="65" y="165" width="5" height="5" fill="#5ae4ff"/><rect x="70" y="165" width="5" height="5" fill="#79e5ff"/><rect x="75" y="165" width="5" height="5" fill="#94e7ff"/><rect x="80" y="165" width="5" height="5" fill="#ace8ff"/><rect x="85" y="165" width="5" height="5" fill="#c3e9ff"/><rect x="90" y="165" width="5" height="5" fill="#daebff"/><rect x="95" y="165" width="5" height="5" fill="#f0edff"/><rect x="100" y="165" width="5" height="5" fill="#ffe7f7"/><rect x="105" y="165" width="5" height="5" fill="#ffd6e3"/><rect x="110" y="165" width="5" height="5" fill="#ffc8d2"/><rect x="115" y="165" width="5" height="5" fill="#ffbbc2"/><rect x="120" y="165" width="5" height="5" fill="#ffb0b4"/><rect x="125" y="165" width="5" height="5" fill="#ffa5a7"/><rect x="130" y="165" width="5" height="5" fill="#ff9c9b"/><rect x="135" y="165" width="5" height="5" fill="#ff9390"/><rect x="140" y="165" width="5" height="5" fill="#ff8b85"/><rect x="145" y="165" width="5" height="5" fill="#ff837b"/><rect x="150" y="165" width="5" height="5" fill="#ff7c71"/><rect x="155" y="165" width="5" height="5" fill="#ff7568"/><rect x="160" y="165" width="5" height="5" fill="#ff6e5e"/><rect x="165" y="165" width="5" height="5" fill="#ff6855"/><rect x="170" y="165" width="5" height="5" fill="#ff624b"/><rect x="175" y="165" width="5" height="5" fill="#ff5c41"/><rect x="180" y="165" width="5" height="5" fill="#ff5636"/><rect x="185" y="165" width="5" height="5" fill="#ff5129"/><rect x="190" y="165" width="5" height="5" fill="#ff4b19"/><rect x="195" y="165" width="5" height="5" fill="#ff4600"/><rect x="200" y="165" width="5" height="5" fill="#ff4000"/><rect x="205" y="165" width="5" height="5" fill="#ff3a00"/><rect x="210" y="165" width="5" height="5" fill="#ff3400"/><rect x="0" y="170" width="5" height="5" fill="#00d2ff"/><rect x="5" y="170" width="5" height="5" fill="#00d3ff"/><rect x="10" y="170" width="5" height="5" fill="#00d3ff"/><rect x="15" y="170" width="5" height="5" fill="#00d3ff"/><rect x="20" y="170" width="5" height="5" fill="#00d4ff"/><rect x="25" y="170" width="5" height="5" fill="#00d4ff"/><rect x="30" y="170" width="5" height="5" fill="#00d5ff"/><rect x="35" y="170" width="5" height="5" fill="#00d5ff"/><rect x="40" y="170" width="5" height="5" fill="#00d6ff"/><rect x="45" y="170" width="5" height="5" fill="#00d6ff"/><rect x="50" y="170" width="5" height="5" fill="#00d7ff"/><rect x="55" y="170" width="5" height="5" fill="#00d7ff"/><rect x="60" y="170" width="5" height="5" fill="#35d8ff"/><rect x="65" y="170" width="5" height="5" fill="#5dd8ff"/><rect x="70" y="170" width="5" height="5" fill="#7bd9ff"/><rect x="75" y="170" width="5" height="5" fill="#94daff"/><rect x="80" y="170" width="5" height="5" fill="#abdbff"/><rect x="85" y="170" width="5" height="5" fill="#c2dbff"/><rect x="90" y="170" width="5" height="5" fill="#d7dcff"/><rect x="95" y="170" width="5" height="5" fill="#edddff"/><rect x="100" y="170" width="5" height="5" fill="#ffdcfc"/><rect x="105" y="170" width="5" height="5" fill="#ffcbe8"/><rect x="110" y="170" width="5" height="5" fill="#ffbdd6"/><rect x="115" y="170" width="5" height="5" fill="#ffb1c7"/><rect x="120" y="170" width="5" height="5" fill="#ffa6b9"/><rect x="125" y="170" width="5" height="5" fill="#ff9cac"/><rect x="130" y="170" width="5" height="5" fill="#ff92a0"/><rect x="135" y="170" width="5" height="5" fill="#ff8a95"/><rect x="140" y="170" width="5" height="5" fill="#ff828b"/><rect x="145" y="170" width="5" height="5" fill="#ff7a81"/><rect x="150" y="170" width="5" height="5" fill="#ff7377"/><rect x="155" y="170" width="5" height="5" fill="#ff6c6e"/><rect x="160" y="170" width="5" height="5" fill="#ff6665"/><rect x="165" y="170" width="5" height="5" fill="#ff5f5c"/><rect x="170" y="170" width="5" height="5" fill="#ff5953"/><rect x="175" y="170" width="5" height="5" fill="#ff5349"/><rect x="180" y="170" width="5" height="5" fill="#ff4d40"/><rect x="185" y="170" width="5" height="5" fill="#ff4735"/><rect x="190" y="170" width="5" height="5" fill="#ff4129"/><rect x="195" y="170" width="5" height="5" fill="#ff3b19"/><rect x="200" y="170" width="5" height="5" fill="#ff3500"/><rect x="205" y="170" width="5" height="5" fill="#ff2e00"/><rect x="210" y="170" width="5" height="5" fill="#ff2700"/><rect x="0" y="175" width="5" height="5" fill="#00cbff"/><rect x="5" y="175" width="5" height="5" fill="#00cbff"/><rect x="10" y="175" width="5" height="5" fill="#00cbff"/><rect x="15" y="175" width="5" height="5" fill="#00cbff"/><rect x="20" y="175" width="5" height="5" fill="#00cbff"/><rect x="25" y="175" width="5" height="5" fill="#00cbff"/><rect x="30" y="175" width="5" height="5" fill="#00cbff"/><rect x="35" y="175" width="5" height="5" fill="#00ccff"/><rect x="40" y="175" width="5" height="5" fill="#00ccff"/><rect x="45" y="175" width="5" height="5" fill="#00ccff"/><rect x="50" y="175" width="5" height="5" fill="#00ccff"/><rect x="55" y="175" width="5" height="5" fill="#00ccff"/><rect x="60" y="175" width="5" height="5" fill="#3bcdff"/><rect x="65" y="175" width="5" height="5" fill="#60cdff"/><rect x="70" y="175" width="5" height="5" fill="#7ccdff"/><rect x="75" y="175" width="5" height="5" fill="#94cdff"/><rect x="80" y="175" width="5" height="5" fill="#abceff"/><rect x="85" y="175" width="5" height="5" fill="#c0ceff"/><rect x="90" y="175" width="5" height="5" fill="#d5ceff"/><rect x="95" y="175" width="5" height="5" fill="#eacfff"/><rect x="100" y="175" width="5" height="5" fill="#fecfff"/><rect x="105" y="175" width="5" height="5" fill="#ffc0ec"/><rect x="110" y="175" width="5" height="5" fill="#ffb3db"/><rect x="115" y="175" width="5" height="5" fill="#ffa7cc"/><rect x="120" y="175" width="5" height="5" fill="#ff9cbe"/><rect x="125" y="175" width="5" height="5" fill="#ff92b1"/><rect x="130" y="175" width="5" height="5" fill="#ff89a5"/><rect x="135" y="175" width="5" height="5" fill="#ff809b"/><rect x="140" y="175" width="5" height="5" fill="#ff7890"/><rect x="145" y="175" width="5" height="5" fill="#ff7186"/><rect x="150" y="175" width="5" height="5" fill="#ff6a7d"/><rect x="155" y="175" width="5" height="5" fill="#ff6374"/><rect x="160" y="175" width="5" height="5" fill="#ff5c6b"/><rect x="165" y="175" width="5" height="5" fill="#ff5662"/><rect x="170" y="175" width="5" height="5" fill="#ff4f5a"/><rect x="175" y="175" width="5" height="5" fill="#ff4951"/><rect x="180" y="175" width="5" height="5" fill="#ff4248"/><rect x="185" y="175" width="5" height="5" fill="#ff3c3e"/><rect x="190" y="175" width="5" height="5" fill="#ff3534"/><rect x="195" y="175" width="5" height="5" fill="#ff2e28"/><rect x="200" y="175" width="5" height="5" fill="#ff2719"/><rect x="205" y="175" width="5" height="5" fill="#ff1e00"/><rect x="210" y="175" width="5" height="5" fill="#ff1200"/><rect x="0" y="180" width="5" height="5" fill="#00c3ff"/><rect x="5" y="180" width="5" height="5" fill="#00c3ff"/><rect x="10" y="180" width="5" height="5" fill="#00c3ff"/><rect x="15" y="180" width="5" height="5" fill="#00c3ff"/><rect x="20" y="180" width="5" height="5" fill="#00c2ff"/><rect x="25" y="180" width="5" height="5" fill="#00c2ff"/><rect x="30" y="180" width="5" height="5" fill="#00c2ff"/><rect x="35" y="180" width="5" height="5" fill="#00c2ff"/><rect x="40" y="180" width="5" height="5" fill="#00c2ff"/><rect x="45" y="180" width="5" height="5" fill="#00c2ff"/><rect x="50" y="180" width="5" height="5" fill="#00c2ff"/><rect x="55" y="180" width="5" height="5" fill="#00c2ff"/><rect x="60" y="180" width="5" height="5" fill="#41c2ff"/><rect x="65" y="180" width="5" height="5" fill="#63c1ff"/><rect x="70" y="180" width="5" height="5" fill="#7dc1ff"/><rect x="75" y="180" width="5" height="5" fill="#94c1ff"/><rect x="80" y="180" width="5" height="5" fill="#aac1ff"/><rect x="85" y="180" width="5" height="5" fill="#bfc1ff"/><rect x="90" y="180" width="5" height="5" fill="#d3c0ff"/><rect x="95" y="180" width="5" height="5" fill="#e6c0ff"/><rect x="100" y="180" width="5" height="5" fill="#fac0ff"/><rect x="105" y="180" width="5" height="5" fill="#ffb5f0"/><rect x="110" y="180" width="5" height="5" fill="#ffa8df"/><rect x="115" y="180" width="5" height="5" fill="#ff9cd0"/><rect x="120" y="180" width="5" height="5" fill="#ff91c2"/><rect x="125" y="180" width="5" height="5" fill="#ff88b6"/><rect x="130" y="180" width="5" height="5" fill="#ff7faa"/><rect x="135" y="180" width="5" height="5" fill="#ff769f"/><rect x="140" y="180" width="5" height="5" fill="#ff6e95"/><rect x="145" y="180" width="5" height="5" fill="#ff678c"/><rect x="150" y="180" width="5" height="5" fill="#ff5f82"/><rect x="155" y="180" width="5" height="5" fill="#ff5879"/><rect x="160" y="180" width="5" height="5" fill="#ff5271"/><rect x="165" y="180" width="5" height="5" fill="#ff4b68"/><rect x="170" y="180" width="5" height="5" fill="#ff4460"/><rect x="175" y="180" width="5" height="5" fill="#ff3d58"/><rect x="180" y="180" width="5" height="5" fill="#ff364f"/><rect x="185" y="180" width="5" height="5" fill="#ff2e46"/><rect x="190" y="180" width="5" height="5" fill="#ff263d"/><rect x="195" y="180" width="5" height="5" fill="#ff1d33"/><rect x="200" y="180" width="5" height="5" fill="#ff0f28"/><rect x="205" y="180" width="5" height="5" fill="#ff0018"/><rect x="210" y="180" width="5" height="5" fill="#ff0000"/><rect x="0" y="185" width="5" height="5" fill="#00bbff"/><rect x="5" y="185" width="5" height="5" fill="#00bbff"/><rect x="10" y="185" width="5" height="5" fill="#00bbff"/><rect x="15" y="185" width="5" height="5" fill="#00baff"/><rect x="20" y="185" width="5" height="5" fill="#00baff"/><rect x="25" y="185" width="5" height="5" fill="#00baff"/><rect x="30" y="185" width="5" height="5" fill="#00b9ff"/><rect x="35" y="185" width="5" height="5" fill="#00b9ff"/><rect x="40" y="185" width="5" height="5" fill="#00b9ff"/><rect x="45" y="185" width="5" height="5" fill="#00b8ff"/><rect x="50" y="185" width="5" height="5" fill="#00b8ff"/><rect x="55" y="185" width="5" height="5" fill="#00b7ff"/><rect x="60" y="185" width="5" height="5" fill="#45b7ff"/><rect x="65" y="185" width="5" height="5" fill="#65b6ff"/><rect x="70" y="185" width="5" height="5" fill="#7eb6ff"/><rect x="75" y="185" width="5" height="5" fill="#94b5ff"/><rect x="80" y="185" width="5" height="5" fill="#a9b4ff"/><rect x="85" y="185" width="5" height="5" fill="#bdb4ff"/><rect x="90" y="185" width="5" height="5" fill="#d0b3ff"/><rect x="95" y="185" width="5" height="5" fill="#e4b2ff"/><rect x="100" y="185" width="5" height="5" fill="#f7b1ff"/><rect x="105" y="185" width="5" height="5" fill="#ffa9f4"/><rect x="110" y="185" width="5" height="5" fill="#ff9ce4"/><rect x="115" y="185" width="5" height="5" fill="#ff91d4"/><rect x="120" y="185" width="5" height="5" fill="#ff86c7"/><rect x="125" y="185" width="5" height="5" fill="#ff7dba"/><rect x="130" y="185" width="5" height="5" fill="#ff74af"/><rect x="135" y="185" width="5" height="5" fill="#ff6ba4"/><rect x="140" y="185" width="5" height="5" fill="#ff639a"/><rect x="145" y="185" width="5" height="5" fill="#ff5c91"/><rect x="150" y="185" width="5" height="5" fill="#ff5487"/><rect x="155" y="185" width="5" height="5" fill="#ff4d7f"/><rect x="160" y="185" width="5" height="5" fill="#ff4676"/><rect x="165" y="185" width="5" height="5" fill="#ff3e6e"/><rect x="170" y="185" width="5" height="5" fill="#ff3766"/><rect x="175" y="185" width="5" height="5" fill="#ff2f5e"/><rect x="180" y="185" width="5" height="5" fill="#ff2656"/><rect x="185" y="185" width="5" height="5" fill="#ff1b4d"/><rect x="190" y="185" width="5" height="5" fill="#ff0a45"/><rect x="195" y="185" width="5" height="5" fill="#ff003c"/><rect x="200" y="185" width="5" height="5" fill="#ff0032"/><rect x="205" y="185" width="5" height="5" fill="#ff0027"/><rect x="210" y="185" width="5" height="5" fill="#ff0018"/><rect x="0" y="190" width="5" height="5" fill="#00b3ff"/><rect x="5" y="190" width="5" height="5" fill="#00b3ff"/><rect x="10" y="190" width="5" height="5" fill="#00b3ff"/><rect x="15" y="190" width="5" height="5" fill="#00b2ff"/><rect x="20" y="190" width="5" height="5" fill="#00b2ff"/><rect x="25" y="190" width="5" height="5" fill="#00b1ff"/><rect x="30" y="190" width="5" height="5" fill="#00b0ff"/><rect x="35" y="190" width="5" height="5" fill="#00b0ff"/><rect x="40" y="190" width="5" height="5" fill="#00afff"/><rect x="45" y="190" width="5" height="5" fill="#00aeff"/><rect x="50" y="190" width="5" height="5" fill="#00aeff"/><rect x="55" y="190" width="5" height="5" fill="#17adff"/><rect x="60" y="190" width="5" height="5" fill="#49acff"/><rect x="65" y="190" width="5" height="5" fill="#67abff"/><rect x="70" y="190" width="5" height="5" fill="#7faaff"/><rect x="75" y="190" width="5" height="5" fill="#95a9ff"/><rect x="80" y="190" width="5" height="5" fill="#a9a8ff"/><rect x="85" y="190" width="5" height="5" fill="#bca7ff"/><rect x="90" y="190" width="5" height="5" fill="#cea5ff"/><rect x="95" y="190" width="5" height="5" fill="#e1a4ff"/><rect x="100" y="190" width="5" height="5" fill="#f3a2ff"/><rect x="105" y="190" width="5" height="5" fill="#ff9cf8"/><rect x="110" y="190" width="5" height="5" fill="#ff90e7"/><rect x="115" y="190" width="5" height="5" fill="#ff85d9"/><rect x="120" y="190" width="5" height="5" fill="#ff7bcb"/><rect x="125" y="190" width="5" height="5" fill="#ff71bf"/><rect x="130" y="190" width="5" height="5" fill="#ff68b3"/><rect x="135" y="190" width="5" height="5" fill="#ff60a9"/><rect x="140" y="190" width="5" height="5" fill="#ff589f"/><rect x="145" y="190" width="5" height="5" fill="#ff5095"/><rect x="150" y="190" width="5" height="5" fill="#ff488c"/><rect x="155" y="190" width="5" height="5" fill="#ff4084"/><rect x="160" y="190" width="5" height="5" fill="#ff377b"/><rect x="165" y="190" width="5" height="5" fill="#ff2f73"/><rect x="170" y="190" width="5" height="5" fill="#ff256b"/><rect x="175" y="190" width="5" height="5" fill="#ff1963"/><rect x="180" y="190" width="5" height="5" fill="#ff005c"/><rect x="185" y="190" width="5" height="5" fill="#ff0054"/><rect x="190" y="190" width="5" height="5" fill="#ff004c"/><rect x="195" y="190" width="5" height="5" fill="#ff0044"/><rect x="200" y="190" width="5" height="5" fill="#ff003b"/><rect x="205" y="190" width="5" height="5" fill="#ff0031"/><rect x="210" y="190" width="5" height="5" fill="#ff0027"/><rect x="0" y="195" width="5" height="5" fill="#00acff"/><rect x="5" y="195" width="5" height="5" fill="#00abff"/><rect x="10" y="195" width="5" height="5" fill="#00abff"/><rect x="15" y="195" width="5" height="5" fill="#00aaff"/><rect x="20" y="195" width="5" height="5" fill="#00a9ff"/><rect x="25" y="195" width="5" height="5" fill="#00a8ff"/><rect x="30" y="195" width="5" height="5" fill="#00a7ff"/><rect x="35" y="195" width="5" height="5" fill="#00a7ff"/><rect x="40" y="195" width="5" height="5" fill="#00a6ff"/><rect x="45" y="195" width="5" height="5" fill="#00a5ff"/><rect x="50" y="195" width="5" height="5" fill="#00a4ff"/><rect x="55" y="195" width="5" height="5" fill="#22a2ff"/><rect x="60" y="195" width="5" height="5" fill="#4da1ff"/><rect x="65" y="195" width="5" height="5" fill="#69a0ff"/><rect x="70" y="195" width="5" height="5" fill="#809fff"/><rect x="75" y="195" width="5" height="5" fill="#959dff"/><rect x="80" y="195" width="5" height="5" fill="#a89bff"/><rect x="85" y="195" width="5" height="5" fill="#bb9aff"/><rect x="90" y="195" width="5" height="5" fill="#cd98ff"/><rect x="95" y="195" width="5" height="5" fill="#de96ff"/><rect x="100" y="195" width="5" height="5" fill="#f093ff"/><rect x="105" y="195" width="5" height="5" fill="#ff8ffc"/><rect x="110" y="195" width="5" height="5" fill="#ff83eb"/><rect x="115" y="195" width="5" height="5" fill="#ff78dc"/><rect x="120" y="195" width="5" height="5" fill="#ff6ecf"/><rect x="125" y="195" width="5" height="5" fill="#ff64c3"/><rect x="130" y="195" width="5" height="5" fill="#ff5bb7"/><rect x="135" y="195" width="5" height="5" fill="#ff53ad"/><rect x="140" y="195" width="5" height="5" fill="#ff4aa3"/><rect x="145" y="195" width="5" height="5" fill="#ff419a"/><rect x="150" y="195" width="5" height="5" fill="#ff3891"/><rect x="155" y="195" width="5" height="5" fill="#ff2f88"/><rect x="160" y="195" width="5" height="5" fill="#ff2480"/><rect x="165" y="195" width="5" height="5" fill="#ff1778"/><rect x="170" y="195" width="5" height="5" fill="#ff0070"/><rect x="175" y="195" width="5" height="5" fill="#ff0069"/><rect x="180" y="195" width="5" height="5" fill="#ff0061"/><rect x="185" y="195" width="5" height="5" fill="#ff005a"/><rect x="190" y="195" width="5" height="5" fill="#ff0052"/><rect x="195" y="195" width="5" height="5" fill="#ff004a"/><rect x="200" y="195" width="5" height="5" fill="#ff0042"/><rect x="205" y="195" width="5" height="5" fill="#ff003a"/><rect x="210" y="195" width="5" height="5" fill="#ff0031"/><rect x="0" y="200" width="5" height="5" fill="#00a4ff"/><rect x="5" y="200" width="5" height="5" fill="#00a3ff"/><rect x="10" y="200" width="5" height="5" fill="#00a3ff"/><rect x="15" y="200" width="5" height="5" fill="#00a2ff"/><rect x="20" y="200" width="5" height="5" fill="#00a1ff"/><rect x="25" y="200" width="5" height="5" fill="#00a0ff"/><rect x="30" y="200" width="5" height="5" fill="#009fff"/><rect x="35" y="200" width="5" height="5" fill="#009dff"/><rect x="40" y="200" width="5" height="5" fill="#009cff"/><rect x="45" y="200" width="5" height="5" fill="#009bff"/><rect x="50" y="200" width="5" height="5" fill="#0099ff"/><rect x="55" y="200" width="5" height="5" fill="#2b98ff"/><rect x="60" y="200" width="5" height="5" fill="#5096ff"/><rect x="65" y="200" width="5" height="5" fill="#6b95ff"/><rect x="70" y="200" width="5" height="5" fill="#8193ff"/><rect x="75" y="200" width="5" height="5" fill="#9591ff"/><rect x="80" y="200" width="5" height="5" fill="#a78fff"/><rect x="85" y="200" width="5" height="5" fill="#b98dff"/><rect x="90" y="200" width="5" height="5" fill="#cb8aff"/><rect x="95" y="200" width="5" height="5" fill="#dc87ff"/><rect x="100" y="200" width="5" height="5" fill="#ed84ff"/><rect x="105" y="200" width="5" height="5" fill="#ff81ff"/><rect x="110" y="200" width="5" height="5" fill="#ff75ef"/><rect x="115" y="200" width="5" height="5" fill="#ff6ae0"/><rect x="120" y="200" width="5" height="5" fill="#ff60d3"/><rect x="125" y="200" width="5" height="5" fill="#ff56c7"/><rect x="130" y="200" width="5" height="5" fill="#ff4dbb"/><rect x="135" y="200" width="5" height="5" fill="#ff43b1"/><rect x="140" y="200" width="5" height="5" fill="#ff3aa7"/><rect x="145" y="200" width="5" height="5" fill="#ff2f9e"/><rect x="150" y="200" width="5" height="5" fill="#ff2495"/><rect x="155" y="200" width="5" height="5" fill="#ff148d"/><rect x="160" y="200" width="5" height="5" fill="#ff0085"/><rect x="165" y="200" width="5" height="5" fill="#ff007d"/><rect x="170" y="200" width="5" height="5" fill="#ff0075"/><rect x="175" y="200" width="5" height="5" fill="#ff006e"/><rect x="180" y="200" width="5" height="5" fill="#ff0066"/><rect x="185" y="200" width="5" height="5" fill="#ff005f"/><rect x="190" y="200" width="5" height="5" fill="#ff0058"/><rect x="195" y="200" width="5" height="5" fill="#ff0051"/><rect x="200" y="200" width="5" height="5" fill="#ff0049"/><rect x="205" y="200" width="5" height="5" fill="#ff0041"/><rect x="210" y="200" width="5" height="5" fill="#ff0039"/><rect x="0" y="205" width="5" height="5" fill="#009dff"/><rect x="5" y="205" width="5" height="5" fill="#009cff"/><rect x="10" y="205" width="5" height="5" fill="#009aff"/><rect x="15" y="205" width="5" height="5" fill="#0099ff"/><rect x="20" y="205" width="5" height="5" fill="#0098ff"/><rect x="25" y="205" width="5" height="5" fill="#0097ff"/><rect x="30" y="205" width="5" height="5" fill="#0096ff"/><rect x="35" y="205" width="5" height="5" fill="#0094ff"/><rect x="40" y="205" width="5" height="5" fill="#0093ff"/><rect x="45" y="205" width="5" height="5" fill="#0091ff"/><rect x="50" y="205" width="5" height="5" fill="#008fff"/><rect x="55" y="205" width="5" height="5" fill="#318dff"/><rect x="60" y="205" width="5" height="5" fill="#538cff"/><rect x="65" y="205" width="5" height="5" fill="#6c89ff"/><rect x="70" y="205" width="5" height="5" fill="#8187ff"/><rect x="75" y="205" width="5" height="5" fill="#9585ff"/><rect x="80" y="205" width="5" height="5" fill="#a782ff"/><rect x="85" y="205" width="5" height="5" fill="#b87fff"/><rect x="90" y="205" width="5" height="5" fill="#c97cff"/><rect x="95" y="205" width="5" height="5" fill="#da78ff"/><rect x="100" y="205" width="5" height="5" fill="#eb75ff"/><rect x="105" y="205" width="5" height="5" fill="#fb70ff"/><rect x="110" y="205" width="5" height="5" fill="#ff66f2"/><rect x="115" y="205" width="5" height="5" fill="#ff5be4"/><rect x="120" y="205" width="5" height="5" fill="#ff50d7"/><rect x="125" y="205" width="5" height="5" fill="#ff46ca"/><rect x="130" y="205" width="5" height="5" fill="#ff3bbf"/><rect x="135" y="205" width="5" height="5" fill="#ff30b5"/><rect x="140" y="205" width="5" height="5" fill="#ff23ab"/><rect x="145" y="205" width="5" height="5" fill="#ff10a2"/><rect x="150" y="205" width="5" height="5" fill="#ff0099"/><rect x="155" y="205" width="5" height="5" fill="#ff0091"/><rect x="160" y="205" width="5" height="5" fill="#ff0089"/><rect x="165" y="205" width="5" height="5" fill="#ff0081"/><rect x="170" y="205" width="5" height="5" fill="#ff007a"/><rect x="175" y="205" width="5" height="5" fill="#ff0073"/><rect x="180" y="205" width="5" height="5" fill="#ff006b"/><rect x="185" y="205" width="5" height="5" fill="#ff0064"/><rect x="190" y="205" width="5" height="5" fill="#ff005d"/><rect x="195" y="205" width="5" height="5" fill="#ff0056"/><rect x="200" y="205" width="5" height="5" fill="#ff004f"/><rect x="205" y="205" width="5" height="5" fill="#ff0048"/><rect x="210" y="205" width="5" height="5" fill="#ff0040"/><rect x="0" y="210" width="5" height="5" fill="#0095ff"/><rect x="5" y="210" width="5" height="5" fill="#0094ff"/><rect x="10" y="210" width="5" height="5" fill="#0092ff"/><rect x="15" y="210" width="5" height="5" fill="#0091ff"/><rect x="20" y="210" width="5" height="5" fill="#0090ff"/><rect x="25" y="210" width="5" height="5" fill="#008eff"/><rect x="30" y="210" width="5" height="5" fill="#008dff"/><rect x="35" y="210" width="5" height="5" fill="#008bff"/><rect x="40" y="210" width="5" height="5" fill="#0089ff"/><rect x="45" y="210" width="5" height="5" fill="#0087ff"/><rect x="50" y="210" width="5" height="5" fill="#0085ff"/><rect x="55" y="210" width="5" height="5" fill="#3783ff"/><rect x="60" y="210" width="5" height="5" fill="#5680ff"/><rect x="65" y="210" width="5" height="5" fill="#6e7eff"/><rect x="70" y="210" width="5" height="5" fill="#827bff"/><rect x="75" y="210" width="5" height="5" fill="#9578ff"/><rect x="80" y="210" width="5" height="5" fill="#a675ff"/><rect x="85" y="210" width="5" height="5" fill="#b771ff"/><rect x="90" y="210" width="5" height="5" fill="#c86dff"/><rect x="95" y="210" width="5" height="5" fill="#d869ff"/><rect x="100" y="210" width="5" height="5" fill="#e864ff"/><rect x="105" y="210" width="5" height="5" fill="#f85eff"/><rect x="110" y="210" width="5" height="5" fill="#ff54f6"/><rect x="115" y="210" width="5" height="5" fill="#ff49e7"/><rect x="120" y="210" width="5" height="5" fill="#ff3dda"/><rect x="125" y="210" width="5" height="5" fill="#ff30ce"/><rect x="130" y="210" width="5" height="5" fill="#ff21c3"/><rect x="135" y="210" width="5" height="5" fill="#ff07b9"/><rect x="140" y="210" width="5" height="5" fill="#ff00af"/><rect x="145" y="210" width="5" height="5" fill="#ff00a6"/><rect x="150" y="210" width="5" height="5" fill="#ff009d"/><rect x="155" y="210" width="5" height="5" fill="#ff0095"/><rect x="160" y="210" width="5" height="5" fill="#ff008d"/><rect x="165" y="210" width="5" height="5" fill="#ff0086"/><rect x="170" y="210" width="5" height="5" fill="#ff007e"/><rect x="175" y="210" width="5" height="5" fill="#ff0077"/><rect x="180" y="210" width="5" height="5" fill="#ff0070"/><rect x="185" y="210" width="5" height="5" fill="#ff0069"/><rect x="190" y="210" width="5" height="5" fill="#ff0062"/><rect x="195" y="210" width="5" height="5" fill="#ff005c"/><rect x="200" y="210" width="5" height="5" fill="#ff0055"/><rect x="205" y="210" width="5" height="5" fill="#ff004e"/><rect x="210" y="210" width="5" height="5" fill="#ff0047"/><rect x="0" y="215" width="5" height="5" fill="#008dff"/><rect x="5" y="215" width="5" height="5" fill="#008cff"/><rect x="10" y="215" width="5" height="5" fill="#008aff"/><rect x="15" y="215" width="5" height="5" fill="#0089ff"/><rect x="20" y="215" width="5" height="5" fill="#0087ff"/><rect x="25" y="215" width="5" height="5" fill="#0085ff"/><rect x="30" y="215" width="5" height="5" fill="#0083ff"/><rect x="35" y="215" width="5" height="5" fill="#0081ff"/><rect x="40" y="215" width="5" height="5" fill="#007fff"/><rect x="45" y="215" width="5" height="5" fill="#007dff"/><rect x="50" y="215" width="5" height="5" fill="#007aff"/><rect x="55" y="215" width="5" height="5" fill="#3b78ff"/><rect x="60" y="215" width="5" height="5" fill="#5875ff"/><rect x="65" y="215" width="5" height="5" fill="#6f72ff"/><rect x="70" y="215" width="5" height="5" fill="#836eff"/><rect x="75" y="215" width="5" height="5" fill="#956bff"/><rect x="80" y="215" width="5" height="5" fill="#a667ff"/><rect x="85" y="215" width="5" height="5" fill="#b662ff"/><rect x="90" y="215" width="5" height="5" fill="#c65dff"/><rect x="95" y="215" width="5" height="5" fill="#d658ff"/><rect x="100" y="215" width="5" height="5" fill="#e651ff"/><rect x="105" y="215" width="5" height="5" fill="#f54aff"/><rect x="110" y="215" width="5" height="5" fill="#ff3ff9"/><rect x="115" y="215" width="5" height="5" fill="#ff31eb"/><rect x="120" y="215" width="5" height="5" fill="#ff20dd"/><rect x="125" y="215" width="5" height="5" fill="#ff00d2"/><rect x="130" y="215" width="5" height="5" fill="#ff00c7"/><rect x="135" y="215" width="5" height="5" fill="#ff00bc"/><rect x="140" y="215" width="5" height="5" fill="#ff00b3"/><rect x="145" y="215" width="5" height="5" fill="#ff00aa"/><rect x="150" y="215" width="5" height="5" fill="#ff00a1"/><rect x="155" y="215" width="5" height="5" fill="#ff0099"/><rect x="160" y="215" width="5" height="5" fill="#ff0091"/><rect x="165" y="215" width="5" height="5" fill="#ff008a"/><rect x="170" y="215" width="5" height="5" fill="#ff0082"/><rect x="175" y="215" width="5" height="5" fill="#ff007b"/><rect x="180" y="215" width="5" height="5" fill="#ff0074"/><rect x="185" y="215" width="5" height="5" fill="#ff006e"/><rect x="190" y="215" width="5" height="5" fill="#ff0067"/><rect x="195" y="215" width="5" height="5" fill="#ff0060"/><rect x="200" y="215" width="5" height="5" fill="#ff005a"/><rect x="205" y="215" width="5" height="5" fill="#ff0053"/><rect x="210" y="215" width="5" height="5" fill="#ff004c"/><rect x="0" y="220" width="5" height="5" fill="#0085ff"/><rect x="5" y="220" width="5" height="5" fill="#0084ff"/><rect x="10" y="220" width="5" height="5" fill="#0082ff"/><rect x="15" y="220" width="5" height="5" fill="#0080ff"/><rect x="20" y="220" width="5" height="5" fill="#007eff"/><rect x="25" y="220" width="5" height="5" fill="#007cff"/><rect x="30" y="220" width="5" height="5" fill="#007aff"/><rect x="35" y="220" width="5" height="5" fill="#0078ff"/><rect x="40" y="220" width="5" height="5" fill="#0075ff"/><rect x="45" y="220" width="5" height="5" fill="#0072ff"/><rect x="50" y="220" width="5" height="5" fill="#076fff"/><rect x="55" y="220" width="5" height="5" fill="#3f6cff"/><rect x="60" y="220" width="5" height="5" fill="#5b69ff"/><rect x="65" y="220" width="5" height="5" fill="#7065ff"/><rect x="70" y="220" width="5" height="5" fill="#8361ff"/><rect x="75" y="220" width="5" height="5" fill="#955dff"/><rect x="80" y="220" width="5" height="5" fill="#a658ff"/><rect x="85" y="220" width="5" height="5" fill="#b652ff"/><rect x="90" y="220" width="5" height="5" fill="#c54bff"/><rect x="95" y="220" width="5" height="5" fill="#d444ff"/><rect x="100" y="220" width="5" height="5" fill="#e43bff"/><rect x="105" y="220" width="5" height="5" fill="#f32fff"/><rect x="110" y="220" width="5" height="5" fill="#ff1dfc"/><rect x="115" y="220" width="5" height="5" fill="#ff00ee"/><rect x="120" y="220" width="5" height="5" fill="#ff00e1"/><rect x="125" y="220" width="5" height="5" fill="#ff00d5"/><rect x="130" y="220" width="5" height="5" fill="#ff00ca"/><rect x="135" y="220" width="5" height="5" fill="#ff00c0"/><rect x="140" y="220" width="5" height="5" fill="#ff00b6"/><rect x="145" y="220" width="5" height="5" fill="#ff00ad"/><rect x="150" y="220" width="5" height="5" fill="#ff00a5"/><rect x="155" y="220" width="5" height="5" fill="#ff009d"/><rect x="160" y="220" width="5" height="5" fill="#ff0095"/><rect x="165" y="220" width="5" height="5" fill="#ff008e"/><rect x="170" y="220" width="5" height="5" fill="#ff0086"/><rect x="175" y="220" width="5" height="5" fill="#ff007f"/><rect x="180" y="220" width="5" height="5" fill="#ff0079"/><rect x="185" y="220" width="5" height="5" fill="#ff0072"/><rect x="190" y="220" width="5" height="5" fill="#ff006c"/><rect x="195" y="220" width="5" height="5" fill="#ff0065"/><rect x="200" y="220" width="5" height="5" fill="#ff005f"/><rect x="205" y="220" width="5" height="5" fill="#ff0058"/><rect x="210" y="220" width="5" height="5" fill="#ff0052"/><rect x="0" y="225" width="5" height="5" fill="#007dff"/><rect x="5" y="225" width="5" height="5" fill="#007bff"/><rect x="10" y="225" width="5" height="5" fill="#0079ff"/><rect x="15" y="225" width="5" height="5" fill="#0077ff"/><rect x="20" y="225" width="5" height="5" fill="#0075ff"/><rect x="25" y="225" width="5" height="5" fill="#0073ff"/><rect x="30" y="225" width="5" height="5" fill="#0070ff"/><rect x="35" y="225" width="5" height="5" fill="#006dff"/><rect x="40" y="225" width="5" height="5" fill="#006aff"/><rect x="45" y="225" width="5" height="5" fill="#0067ff"/><rect x="50" y="225" width="5" height="5" fill="#1964ff"/><rect x="55" y="225" width="5" height="5" fill="#4360ff"/><rect x="60" y="225" width="5" height="5" fill="#5d5cff"/><rect x="65" y="225" width="5" height="5" fill="#7258ff"/><rect x="70" y="225" width="5" height="5" fill="#8452ff"/><rect x="75" y="225" width="5" height="5" fill="#954dff"/><rect x="80" y="225" width="5" height="5" fill="#a546ff"/><rect x="85" y="225" width="5" height="5" fill="#b53fff"/><rect x="90" y="225" width="5" height="5" fill="#c436ff"/><rect x="95" y="225" width="5" height="5" fill="#d32aff"/><rect x="100" y="225" width="5" height="5" fill="#e117ff"/><rect x="105" y="225" width="5" height="5" fill="#f000ff"/><rect x="110" y="225" width="5" height="5" fill="#ff00ff"/><rect x="115" y="225" width="5" height="5" fill="#ff00f1"/><rect x="120" y="225" width="5" height="5" fill="#ff00e4"/><rect x="125" y="225" width="5" height="5" fill="#ff00d8"/><rect x="130" y="225" width="5" height="5" fill="#ff00cd"/><rect x="135" y="225" width="5" height="5" fill="#ff00c3"/><rect x="140" y="225" width="5" height="5" fill="#ff00ba"/><rect x="145" y="225" width="5" height="5" fill="#ff00b1"/><rect x="150" y="225" width="5" height="5" fill="#ff00a8"/><rect x="155" y="225" width="5" height="5" fill="#ff00a0"/><rect x="160" y="225" width="5" height="5" fill="#ff0099"/><rect x="165" y="225" width="5" height="5" fill="#ff0091"/><rect x="170" y="225" width="5" height="5" fill="#ff008a"/><rect x="175" y="225" width="5" height="5" fill="#ff0083"/><rect x="180" y="225" width="5" height="5" fill="#ff007d"/><rect x="185" y="225" width="5" height="5" fill="#ff0076"/><rect x="190" y="225" width="5" height="5" fill="#ff0070"/><rect x="195" y="225" width="5" height="5" fill="#ff0069"/><rect x="200" y="225" width="5" height="5" fill="#ff0063"/><rect x="205" y="225" width="5" height="5" fill="#ff005d"/><rect x="210" y="225" width="5" height="5" fill="#ff0057"/><rect x="0" y="230" width="5" height="5" fill="#0075ff"/><rect x="5" y="230" width="5" height="5" fill="#0073ff"/><rect x="10" y="230" width="5" height="5" fill="#0071ff"/><rect x="15" y="230" width="5" height="5" fill="#006eff"/><rect x="20" y="230" width="5" height="5" fill="#006cff"/><rect x="25" y="230" width="5" height="5" fill="#0069ff"/><rect x="30" y="230" width="5" height="5" fill="#0066ff"/><rect x="35" y="230" width="5" height="5" fill="#0063ff"/><rect x="40" y="230" width="5" height="5" fill="#005fff"/><rect x="45" y="230" width="5" height="5" fill="#005cff"/><rect x="50" y="230" width="5" height="5" fill="#2257ff"/><rect x="55" y="230" width="5" height="5" fill="#4653ff"/><rect x="60" y="230" width="5" height="5" fill="#5f4eff"/><rect x="65" y="230" width="5" height="5" fill="#7348ff"/><rect x="70" y="230" width="5" height="5" fill="#8542ff"/><rect x="75" y="230" width="5" height="5" fill="#953aff"/><rect x="80" y="230" width="5" height="5" fill="#a531ff"/><rect x="85" y="230" width="5" height="5" fill="#b424ff"/><rect x="90" y="230" width="5" height="5" fill="#c30eff"/><rect x="95" y="230" width="5" height="5" fill="#d100ff"/><rect x="100" y="230" width="5" height="5" fill="#df00ff"/><rect x="105" y="230" width="5" height="5" fill="#ee00ff"/><rect x="110" y="230" width="5" height="5" fill="#fc00ff"/><rect x="115" y="230" width="5" height="5" fill="#ff00f4"/><rect x="120" y="230" width="5" height="5" fill="#ff00e7"/><rect x="125" y="230" width="5" height="5" fill="#ff00db"/><rect x="130" y="230" width="5" height="5" fill="#ff00d0"/><rect x="135" y="230" width="5" height="5" fill="#ff00c6"/><rect x="140" y="230" width="5" height="5" fill="#ff00bd"/><rect x="145" y="230" width="5" height="5" fill="#ff00b4"/><rect x="150" y="230" width="5" height="5" fill="#ff00ac"/><rect x="155" y="230" width="5" height="5" fill="#ff00a4"/><rect x="160" y="230" width="5" height="5" fill="#ff009c"/><rect x="165" y="230" width="5" height="5" fill="#ff0095"/><rect x="170" y="230" width="5" height="5" fill="#ff008e"/><rect x="175" y="230" width="5" height="5" fill="#ff0087"/><rect x="180" y="230" width="5" height="5" fill="#ff0081"/><rect x="185" y="230" width="5" height="5" fill="#ff007a"/><rect x="190" y="230" width="5" height="5" fill="#ff0074"/><rect x="195" y="230" width="5" height="5" fill="#ff006e"/><rect x="200" y="230" width="5" height="5" fill="#ff0068"/><rect x="205" y="230" width="5" height="5" fill="#ff0061"/><rect x="210" y="230" width="5" height="5" fill="#ff005b"/><rect x="0" y="235" width="5" height="5" fill="#006dff"/><rect x="5" y="235" width="5" height="5" fill="#006aff"/><rect x="10" y="235" width="5" height="5" fill="#0068ff"/><rect x="15" y="235" width="5" height="5" fill="#0065ff"/><rect x="20" y="235" width="5" height="5" fill="#0062ff"/><rect x="25" y="235" width="5" height="5" fill="#005fff"/><rect x="30" y="235" width="5" height="5" fill="#005bff"/><rect x="35" y="235" width="5" height="5" fill="#0057ff"/><rect x="40" y="235" width="5" height="5" fill="#0053ff"/><rect x="45" y="235" width="5" height="5" fill="#004fff"/><rect x="50" y="235" width="5" height="5" fill="#294aff"/><rect x="55" y="235" width="5" height="5" fill="#4944ff"/><rect x="60" y="235" width="5" height="5" fill="#603eff"/><rect x="65" y="235" width="5" height="5" fill="#7436ff"/><rect x="70" y="235" width="5" height="5" fill="#852cff"/><rect x="75" y="235" width="5" height="5" fill="#9520ff"/><rect x="80" y="235" width="5" height="5" fill="#a400ff"/><rect x="85" y="235" width="5" height="5" fill="#b300ff"/><rect x="90" y="235" width="5" height="5" fill="#c100ff"/><rect x="95" y="235" width="5" height="5" fill="#d000ff"/><rect x="100" y="235" width="5" height="5" fill="#de00ff"/><rect x="105" y="235" width="5" height="5" fill="#eb00ff"/><rect x="110" y="235" width="5" height="5" fill="#f900ff"/><rect x="115" y="235" width="5" height="5" fill="#ff00f7"/><rect x="120" y="235" width="5" height="5" fill="#ff00ea"/><rect x="125" y="235" width="5" height="5" fill="#ff00de"/><rect x="130" y="235" width="5" height="5" fill="#ff00d4"/><rect x="135" y="235" width="5" height="5" fill="#ff00ca"/><rect x="140" y="235" width="5" height="5" fill="#ff00c0"/><rect x="145" y="235" width="5" height="5" fill="#ff00b7"/><rect x="150" y="235" width="5" height="5" fill="#ff00af"/><rect x="155" y="235" width="5" height="5" fill="#ff00a7"/><rect x="160" y="235" width="5" height="5" fill="#ff00a0"/><rect x="165" y="235" width="5" height="5" fill="#ff0098"/><rect x="170" y="235" width="5" height="5" fill="#ff0091"/><rect x="175" y="235" width="5" height="5" fill="#ff008b"/><rect x="180" y="235" width="5" height="5" fill="#ff0084"/><rect x="185" y="235" width="5" height="5" fill="#ff007e"/><rect x="190" y="235" width="5" height="5" fill="#ff0078"/><rect x="195" y="235" width="5" height="5" fill="#ff0072"/><rect x="200" y="235" width="5" height="5" fill="#ff006c"/><rect x="205" y="235" width="5" height="5" fill="#ff0066"/><rect x="210" y="235" width="5" height="5" fill="#ff0060"/><rect x="0" y="240" width="5" height="5" fill="#0064ff"/><rect x="5" y="240" width="5" height="5" fill="#0061ff"/><rect x="10" y="240" width="5" height="5" fill="#005eff"/><rect x="15" y="240" width="5" height="5" fill="#005bff"/><rect x="20" y="240" width="5" height="5" fill="#0057ff"/><rect x="25" y="240" width="5" height="5" fill="#0054ff"/><rect x="30" y="240" width="5" height="5" fill="#0050ff"/><rect x="35" y="240" width="5" height="5" fill="#004bff"/><rect x="40" y="240" width="5" height="5" fill="#0046ff"/><rect x="45" y="240" width="5" height="5" fill="#0040ff"/><rect x="50" y="240" width="5" height="5" fill="#2f3aff"/><rect x="55" y="240" width="5" height="5" fill="#4c32ff"/><rect x="60" y="240" width="5" height="5" fill="#6228ff"/><rect x="65" y="240" width="5" height="5" fill="#751bff"/><rect x="70" y="240" width="5" height="5" fill="#8600ff"/><rect x="75" y="240" width="5" height="5" fill="#9500ff"/><rect x="80" y="240" width="5" height="5" fill="#a400ff"/><rect x="85" y="240" width="5" height="5" fill="#b200ff"/><rect x="90" y="240" width="5" height="5" fill="#c000ff"/><rect x="95" y="240" width="5" height="5" fill="#ce00ff"/><rect x="100" y="240" width="5" height="5" fill="#dc00ff"/><rect x="105" y="240" width="5" height="5" fill="#e900ff"/><rect x="110" y="240" width="5" height="5" fill="#f700ff"/><rect x="115" y="240" width="5" height="5" fill="#ff00f9"/><rect x="120" y="240" width="5" height="5" fill="#ff00ed"/><rect x="125" y="240" width="5" height="5" fill="#ff00e1"/><rect x="130" y="240" width="5" height="5" fill="#ff00d7"/><rect x="135" y="240" width="5" height="5" fill="#ff00cd"/><rect x="140" y="240" width="5" height="5" fill="#ff00c3"/><rect x="145" y="240" width="5" height="5" fill="#ff00bb"/><rect x="150" y="240" width="5" height="5" fill="#ff00b2"/><rect x="155" y="240" width="5" height="5" fill="#ff00aa"/><rect x="160" y="240" width="5" height="5" fill="#ff00a3"/><rect x="165" y="240" width="5" height="5" fill="#ff009c"/><rect x="170" y="240" width="5" height="5" fill="#ff0095"/><rect x="175" y="240" width="5" height="5" fill="#ff008e"/><rect x="180" y="240" width="5" height="5" fill="#ff0088"/><rect x="185" y="240" width="5" height="5" fill="#ff0082"/><rect x="190" y="240" width="5" height="5" fill="#ff007b"/><rect x="195" y="240" width="5" height="5" fill="#ff0075"/><rect x="200" y="240" width="5" height="5" fill="#ff0070"/><rect x="205" y="240" width="5" height="5" fill="#ff006a"/><rect x="210" y="240" width="5" height="5" fill="#ff0064"/><rect x="0" y="245" width="5" height="5" fill="#005bff"/><rect x="5" y="245" width="5" height="5" fill="#0057ff"/><rect x="10" y="245" width="5" height="5" fill="#0054ff"/><rect x="15" y="245" width="5" height="5" fill="#0050ff"/><rect x="20" y="245" width="5" height="5" fill="#004cff"/><rect x="25" y="245" width="5" height="5" fill="#0048ff"/><rect x="30" y="245" width="5" height="5" fill="#0043ff"/><rect x="35" y="245" width="5" height="5" fill="#003dff"/><rect x="40" y="245" width="5" height="5" fill="#0036ff"/><rect x="45" y="245" width="5" height="5" fill="#002eff"/><rect x="50" y="245" width="5" height="5" fill="#3324ff"/><rect x="55" y="245" width="5" height="5" fill="#4f16ff"/><rect x="60" y="245" width="5" height="5" fill="#6400ff"/><rect x="65" y="245" width="5" height="5" fill="#7600ff"/><rect x="70" y="245" width="5" height="5" fill="#8600ff"/><rect x="75" y="245" width="5" height="5" fill="#9500ff"/><rect x="80" y="245" width="5" height="5" fill="#a400ff"/><rect x="85" y="245" width="5" height="5" fill="#b200ff"/><rect x="90" y="245" width="5" height="5" fill="#bf00ff"/><rect x="95" y="245" width="5" height="5" fill="#cd00ff"/><rect x="100" y="245" width="5" height="5" fill="#da00ff"/><rect x="105" y="245" width="5" height="5" fill="#e700ff"/><rect x="110" y="245" width="5" height="5" fill="#f500ff"/><rect x="115" y="245" width="5" height="5" fill="#ff00fc"/><rect x="120" y="245" width="5" height="5" fill="#ff00f0"/><rect x="125" y="245" width="5" height="5" fill="#ff00e4"/><rect x="130" y="245" width="5" height="5" fill="#ff00d9"/><rect x="135" y="245" width="5" height="5" fill="#ff00d0"/><rect x="140" y="245" width="5" height="5" fill="#ff00c6"/><rect x="145" y="245" width="5" height="5" fill="#ff00be"/><rect x="150" y="245" width="5" height="5" fill="#ff00b5"/><rect x="155" y="245" width="5" height="5" fill="#ff00ae"/><rect x="160" y="245" width="5" height="5" fill="#ff00a6"/><rect x="165" y="245" width="5" height="5" fill="#ff009f"/><rect x="170" y="245" width="5" height="5" fill="#ff0098"/><rect x="175" y="245" width="5" height="5" fill="#ff0092"/><rect x="180" y="245" width="5" height="5" fill="#ff008b"/><rect x="185" y="245" width="5" height="5" fill="#ff0085"/><rect x="190" y="245" width="5" height="5" fill="#ff007f"/><rect x="195" y="245" width="5" height="5" fill="#ff0079"/><rect x="200" y="245" width="5" height="5" fill="#ff0073"/><rect x="205" y="245" width="5" height="5" fill="#ff006e"/><rect x="210" y="245" width="5" height="5" fill="#ff0068"/><rect x="0" y="250" width="5" height="5" fill="#0051ff"/><rect x="5" y="250" width="5" height="5" fill="#004dff"/><rect x="10" y="250" width="5" height="5" fill="#0049ff"/><rect x="15" y="250" width="5" height="5" fill="#0044ff"/><rect x="20" y="250" width="5" height="5" fill="#003fff"/><rect x="25" y="250" width="5" height="5" fill="#003aff"/><rect x="30" y="250" width="5" height="5" fill="#0033ff"/><rect x="35" y="250" width="5" height="5" fill="#002bff"/><rect x="40" y="250" width="5" height="5" fill="#0021ff"/><rect x="45" y="250" width="5" height="5" fill="#0010ff"/><rect x="50" y="250" width="5" height="5" fill="#3800ff"/><rect x="55" y="250" width="5" height="5" fill="#5100ff"/><rect x="60" y="250" width="5" height="5" fill="#6500ff"/><rect x="65" y="250" width="5" height="5" fill="#7700ff"/><rect x="70" y="250" width="5" height="5" fill="#8600ff"/><rect x="75" y="250" width="5" height="5" fill="#9500ff"/><rect x="80" y="250" width="5" height="5" fill="#a300ff"/><rect x="85" y="250" width="5" height="5" fill="#b100ff"/><rect x="90" y="250" width="5" height="5" fill="#be00ff"/><rect x="95" y="250" width="5" height="5" fill="#cb00ff"/><rect x="100" y="250" width="5" height="5" fill="#d800ff"/><rect x="105" y="250" width="5" height="5" fill="#e500ff"/><rect x="110" y="250" width="5" height="5" fill="#f200ff"/><rect x="115" y="250" width="5" height="5" fill="#ff00ff"/><rect x="120" y="250" width="5" height="5" fill="#ff00f2"/><rect x="125" y="250" width="5" height="5" fill="#ff00e7"/><rect x="130" y="250" width="5" height="5" fill="#ff00dc"/><rect x="135" y="250" width="5" height="5" fill="#ff00d2"/><rect x="140" y="250" width="5" height="5" fill="#ff00c9"/><rect x="145" y="250" width="5" height="5" fill="#ff00c1"/><rect x="150" y="250" width="5" height="5" fill="#ff00b8"/><rect x="155" y="250" width="5" height="5" fill="#ff00b1"/><rect x="160" y="250" width="5" height="5" fill="#ff00a9"/><rect x="165" y="250" width="5" height="5" fill="#ff00a2"/><rect x="170" y="250" width="5" height="5" fill="#ff009b"/><rect x="175" y="250" width="5" height="5" fill="#ff0095"/><rect x="180" y="250" width="5" height="5" fill="#ff008f"/><rect x="185" y="250" width="5" height="5" fill="#ff0088"/><rect x="190" y="250" width="5" height="5" fill="#ff0082"/><rect x="195" y="250" width="5" height="5" fill="#ff007d"/><rect x="200" y="250" width="5" height="5" fill="#ff0077"/><rect x="205" y="250" width="5" height="5" fill="#ff0071"/><rect x="210" y="250" width="5" height="5" fill="#ff006c"/></g></g><rect x="28" y="0" width="1" height="256" fill="rgba(0,0,0,0.1)"/><rect x="0" y="227" width="251" height="1" fill="rgba(0,0,0,0.1)"/><rect x="57" y="0" width="1" height="256" fill="rgba(0,0,0,0.1)"/><rect x="0" y="198" width="251" height="1" fill="rgba(0,0,0,0.1)"/><rect x="85" y="0" width="1" height="256" fill="rgba(0,0,0,0.1)"/><rect x="0" y="170" width="251" height="1" fill="rgba(0,0,0,0.1)"/><rect x="113" y="0" width="1" height="256" fill="rgba(0,0,0,0.1)"/><rect x="0" y="142" width="251" height="1" fill="rgba(0,0,0,0.1)"/><rect x="142" y="0" width="1" height="256" fill="rgba(0,0,0,0.1)"/><rect x="0" y="113" width="251" height="1" fill="rgba(0,0,0,0.1)"/><rect x="170" y="0" width="1" height="256" fill="rgba(0,0,0,0.1)"/><rect x="0" y="85" width="251" height="1" fill="rgba(0,0,0,0.1)"/><rect x="198" y="0" width="1" height="256" fill="rgba(0,0,0,0.1)"/><rect x="0" y="57" width="251" height="1" fill="rgba(0,0,0,0.1)"/><rect x="227" y="0" width="1" height="256" fill="rgba(0,0,0,0.1)"/><rect x="0" y="28" width="251" height="1" fill="rgba(0,0,0,0.1)"/><rect x="0" y="0" width="1" height="256" fill="#5a5a5a"/><rect x="0" y="255" width="251" height="1" fill="#5a5a5a"/><polygon points="86.8,86 177.2,160.6 46.6,230.9" fill="none" stroke="#f09c30" stroke-width="1"/><polygon points="93.2,79.6 199.5,179.5 43.6,233.6" fill="none" stroke="#000" stroke-width="1"/></svg>
<canvas id="cie" width="251" height="256" style="position:absolute;left:48px;top:112px;width:251px;height:256px;"></canvas>
<div class="t lab" style="left:51.4px;top:113.6px;font-size:8px;">y</div>
<div class="t lab" style="left:50.6px;top:135.2px;font-size:8.5px;">0.8</div>
<div class="t lab" style="left:50.6px;top:192.2px;font-size:8.5px;">0.6</div>
<div class="t lab" style="left:50.6px;top:249.2px;font-size:8.5px;">0.4</div>
<div class="t lab" style="left:50.6px;top:305.2px;font-size:8.5px;">0.2</div>
<div class="t lab" style="left:50.8px;top:357.6px;font-size:8.5px;">0</div>
<div class="t lab" style="left:98.9px;top:357.6px;font-size:8.5px;">0.2</div>
<div class="t lab" style="left:155.5px;top:357.6px;font-size:8.5px;">0.4</div>
<div class="t lab" style="left:212.1px;top:357.6px;font-size:8.5px;">0.6</div>
<div class="t lab" style="left:268.9px;top:357.6px;font-size:8.5px;">0.8</div>
<div style="position:absolute;left:295px;top:350px;width:4px;height:17px;overflow:hidden;"><div class="t lab" style="left:1.5px;top:7.6px;font-size:8.5px;">x</div></div>
<div class="t" style="left:215.2px;top:161.9px;font-size:13px;font-weight:bold;letter-spacing:0.2px;">Monitor</div>
<div class="t" style="left:215.5px;top:177.2px;font-size:14px;color:#f0a22a;-webkit-text-stroke:0.15px #f0a22a;">sRGB</div>
<div id="bars" style="position:absolute;left:322px;top:112px;width:256px;height:256px;border:1px solid #000;box-shadow:0 0 0 1px #fbfbfb;background:linear-gradient(to bottom,#e0501a 0%,#ec8a1a 20%,#e8e414 40%,#b0d614 60%,#72b41a 80%,#3c8a14 100%);"></div>
<div style="position:absolute;left:323px;top:163px;width:254px;height:1px;background:rgba(0,0,0,0.07);"></div>
<div style="position:absolute;left:323px;top:214px;width:254px;height:1px;background:rgba(0,0,0,0.07);"></div>
<div style="position:absolute;left:323px;top:264px;width:254px;height:1px;background:rgba(0,0,0,0.07);"></div>
<div style="position:absolute;left:323px;top:315px;width:254px;height:1px;background:rgba(0,0,0,0.07);"></div>
<div class="t bl" style="left:324px;top:114.0px;font-size:8px;">10 d E 94</div>
<div class="t bl" style="left:324px;top:160.0px;font-size:8px;">8 d E 94</div>
<div class="t bl" style="left:324px;top:211.0px;font-size:8px;">6 d E 94</div>
<div class="t bl" style="left:324px;top:261.0px;font-size:8px;">4 d E 94</div>
<div class="t bl" style="left:324px;top:312.0px;font-size:8px;">2 d E 94</div>
<div style="position:absolute;left:367px;top:194px;width:10px;height:174px;border:1px solid #000;background:#333333;"></div>
<div style="position:absolute;left:379px;top:215px;width:10px;height:153px;border:1px solid #000;background:#444444;"></div>
<div style="position:absolute;left:391px;top:200px;width:10px;height:168px;border:1px solid #000;background:#888888;"></div>
<div style="position:absolute;left:403px;top:243px;width:10px;height:125px;border:1px solid #000;background:#c8c8c8;"></div>
<div style="position:absolute;left:427px;top:179px;width:10px;height:189px;border:1px solid #000;background:#ff0000;"></div>
<div style="position:absolute;left:439px;top:161px;width:10px;height:207px;border:1px solid #000;background:#00ff00;"></div>
<div style="position:absolute;left:451px;top:112px;width:10px;height:256px;border:1px solid #000;background:#0000ff;"></div>
<div style="position:absolute;left:463px;top:246px;width:10px;height:122px;border:1px solid #000;background:#00ffff;"></div>
<div style="position:absolute;left:475px;top:220px;width:10px;height:148px;border:1px solid #000;background:#ff00ff;"></div>
<div style="position:absolute;left:487px;top:246px;width:10px;height:122px;border:1px solid #000;background:#ffff00;"></div>
<div style="position:absolute;left:499px;top:148px;width:10px;height:220px;border:1px solid #000;background:#aa5555;"></div>
<div style="position:absolute;left:511px;top:212px;width:10px;height:156px;border:1px solid #000;background:#55aa55;"></div>
<div style="position:absolute;left:523px;top:235px;width:10px;height:133px;border:1px solid #000;background:#5555aa;"></div>
<div style="position:absolute;left:535px;top:228px;width:10px;height:140px;border:1px solid #000;background:#55aaaa;"></div>
<div style="position:absolute;left:547px;top:261px;width:10px;height:107px;border:1px solid #000;background:#aa55aa;"></div>
<div style="position:absolute;left:559px;top:228px;width:10px;height:140px;border:1px solid #000;background:#aaaa55;"></div>
<div class="t tb" style="left:110px;top:380px;font-size:12px;">Target</div>
<div class="t tb" style="left:174px;top:380px;font-size:12px;">Current</div>
<div class="t tb" style="left:238px;top:380px;font-size:12px;">Deviation</div>
<div class="t tb" style="left:46.5px;top:395px;font-size:12px;">Gamma</div>
<div class="t tb" style="left:110px;top:395px;font-size:12px;">2.2</div>
<div class="t tb or" style="left:174px;top:395px;font-size:12px;">2.5</div>
<div class="t tb or" style="left:238px;top:395px;font-size:12px;">13%</div>
<div class="t tb" style="left:46.5px;top:410.3px;font-size:12px;">Kelvin</div>
<div class="t tb" style="left:110px;top:410.3px;font-size:12px;">6500</div>
<div class="t tb or" style="left:174px;top:410.3px;font-size:12px;">3870</div>
<div class="t tb or" style="left:238px;top:410.3px;font-size:12px;">40%</div>
<div class="t tb" style="left:46.5px;top:424.8px;font-size:12px;">cd/m2</div>
<div class="t tb" style="left:110px;top:424.8px;font-size:12px;">120</div>
<div class="t tb or" style="left:174px;top:424.8px;font-size:12px;">336</div>
<div class="t tb or" style="left:238px;top:424.8px;font-size:12px;">180%</div>
<div class="t" style="left:322px;top:380px;font-size:12px;letter-spacing:0.05px;">Delta E<span style="margin-left:-1px"> </span>Average</div>
<div class="t" style="left:322px;top:395px;font-size:12px;letter-spacing:0.08px;">Delta E Maximum</div>
<div class="t or" style="left:435px;top:380px;font-size:12px;">5.9</div>
<div class="t or" style="left:432.5px;top:395px;font-size:12px;">15.9</div>
<div class="btn" style="left:19px;top:465px;width:73px;border:2px solid #4f8cca;"></div>
<div style="position:absolute;left:21px;top:467px;width:69px;height:17px;border:1px dotted #000;"></div>
<div class="t" style="left:29.5px;top:470.8px;font-size:11px;letter-spacing:-0.4px;">Main Menu</div>
<div class="btn" style="left:104px;top:465px;width:73px;"></div>
<div class="t" style="left:114.5px;top:470.8px;font-size:11px;">Calibration</div>
<div class="btn" style="left:447px;top:465px;width:73px;"></div>
<div class="t" style="left:470.5px;top:470.8px;font-size:11px;">Save</div>
<div class="btn" style="left:532px;top:465px;width:73px;"></div>
<div class="t" style="left:557.5px;top:470.8px;font-size:11px;">Quit</div>
</div>
<svg id="frame" width="624" height="500"><defs><linearGradient id="fg" x1="0" y1="0" x2="0" y2="1"><stop offset="0" stop-color="#8a9ea2"/><stop offset="0.5" stop-color="#7c8d90"/><stop offset="1" stop-color="#556464"/></linearGradient></defs><rect x="0.5" y="0.5" width="623" height="499" rx="7.5" ry="7.5" fill="none" stroke="url(#fg)" stroke-width="1"/></svg>
<script>
(function(){
var L=[[0.1741,0.0050],[0.1740,0.0050],[0.1738,0.0049],[0.1736,0.0049],[0.1733,0.0048],[0.1730,0.0048],[0.1726,0.0048],[0.1721,0.0048],[0.1714,0.0051],[0.1703,0.0058],[0.1689,0.0069],[0.1669,0.0086],[0.1644,0.0109],[0.1611,0.0138],[0.1566,0.0177],[0.1510,0.0227],[0.1440,0.0297],[0.1355,0.0399],[0.1241,0.0578],[0.1096,0.0868],[0.0913,0.1327],[0.0687,0.2007],[0.0454,0.2950],[0.0235,0.4127],[0.0082,0.5384],[0.0039,0.6548],[0.0139,0.7502],[0.0389,0.8120],[0.0743,0.8338],[0.1142,0.8262],[0.1547,0.8059],[0.1929,0.7816],[0.2296,0.7543],[0.2658,0.7243],[0.3016,0.6923],[0.3373,0.6589],[0.3731,0.6245],[0.4087,0.5896],[0.4441,0.5547],[0.4788,0.5202],[0.5125,0.4866],[0.5448,0.4544],[0.5752,0.4242],[0.6029,0.3965],[0.6270,0.3725],[0.6482,0.3514],[0.6658,0.3340],[0.6801,0.3197],[0.6915,0.3083],[0.7006,0.2993],[0.7079,0.2920],[0.7140,0.2859],[0.7190,0.2809],[0.7230,0.2770],[0.7260,0.2740],[0.7300,0.2700],[0.7320,0.2680],[0.7334,0.2666],[0.7347,0.2653]];
var W=251,H=256,SX=283.3,SY=283.3,OY=255.6,OX=0.5;
var cv=document.getElementById('cie');var c=cv.getContext('2d');
c.fillStyle='#dfdfdf';c.fillRect(0,0,W,H);
for(var k1=1;k1<=8;k1++){var hx=Math.round(k1*28.33),hy=Math.round(255-k1*28.33);c.fillStyle='#c7c7c7';c.fillRect(hx,0,1,H);c.fillRect(0,hy,W,1);}
c.fillStyle='#d0d0d0';c.fillRect(0,0,W,1);
var off=document.createElement('canvas');off.width=W;off.height=H;var oc=off.getContext('2d');
var img=oc.createImageData(W,H),d=img.data;
var wx=0.35,wy=0.33;
function m(X,Y,Z){return [2.3706743*X-0.9000405*Y-0.4706338*Z,-0.5138850*X+1.4253036*Y+0.0885814*Z,0.0052982*X-0.0146949*Y+1.0093968*Z];}
var wr=m(wx/wy,1,(1-wx-wy)/wy);
function g(v){return Math.pow(v,1/2.0);}
for(var j=0;j<H;j++){for(var i=0;i<W;i++){
 var x=(i+0.5-OX)/SX,y=(OY-(j+0.5))/SY; if(y<0.002)y=0.002;
 var r=m(x/y,1,(1-x-y)/y);
 var R=Math.max(r[0]/wr[0],0),G=Math.max(r[1]/wr[1],0),B=Math.max(r[2]/wr[2],0);
 var mx=Math.max(R,G,B)||1;
 var k=(j*W+i)*4;
 d[k]=Math.round(g(R/mx)*255);d[k+1]=Math.round(g(G/mx)*255);d[k+2]=Math.round(g(B/mx)*255);d[k+3]=255;
}}
oc.putImageData(img,0,0);
c.save();c.beginPath();
var P=L.map(function(p){return [OX+p[0]*SX,OY-p[1]*SY];});var n=P.length;c.moveTo(P[0][0],P[0][1]);
for(var q=0;q<n-1;q++){var p0=P[Math.max(q-1,0)],p1=P[q],p2=P[q+1],p3=P[Math.min(q+2,n-1)];
c.bezierCurveTo(p1[0]+(p2[0]-p0[0])/6,p1[1]+(p2[1]-p0[1])/6,p2[0]-(p3[0]-p1[0])/6,p2[1]-(p3[1]-p1[1])/6,p2[0],p2[1]);}
c.closePath();c.clip();c.drawImage(off,0,0);c.restore();
// grid
for(var k2=1;k2<=8;k2++){var gx=Math.round(k2*28.33),gy=Math.round(255-k2*28.33);c.fillStyle='rgba(0,0,0,0.07)';c.fillRect(gx,0,1,H);c.fillRect(0,gy,W,1);}
c.fillStyle='rgba(0,0,0,0.1)';c.fillRect(0,0,W,1);
c.fillStyle='#5a5a5a';c.fillRect(0,0,1,H);c.fillRect(0,255,W,1);
// triangles
function tri(p,col,w){c.strokeStyle=col;c.lineWidth=w;c.beginPath();c.moveTo(p[0][0],p[0][1]);c.lineTo(p[1][0],p[1][1]);c.lineTo(p[2][0],p[2][1]);c.closePath();c.stroke();}
tri([[134.8-48,198-112],[225.2-48,272.6-112],[94.6-48,342.9-112]],'rgba(238,152,40,0.85)',1);
function bl(x0,y0,x1,y1){x0=Math.round(x0);y0=Math.round(y0);x1=Math.round(x1);y1=Math.round(y1);var dx=Math.abs(x1-x0),sx=x0<x1?1:-1,dy=-Math.abs(y1-y0),sy=y0<y1?1:-1,e=dx+dy;c.fillStyle='#000';
for(;;){c.fillRect(x0,y0,1,1);if(x0==x1&&y0==y1)break;var e2=2*e;if(e2>=dy){e+=dy;x0+=sx;}if(e2<=dx){e+=dx;y0+=sy;}}}
var T=[[141.2-48.5,191.6-112.5],[247.5-48.5,291.5-112.5],[91.6-48.5,345.6-112.5]];
bl(T[0][0],T[0][1],T[1][0],T[1][1]);bl(T[1][0],T[1][1],T[2][0],T[2][1]);bl(T[2][0],T[2][1],T[0][0],T[0][1]);
})();
</script>
</body></html>
